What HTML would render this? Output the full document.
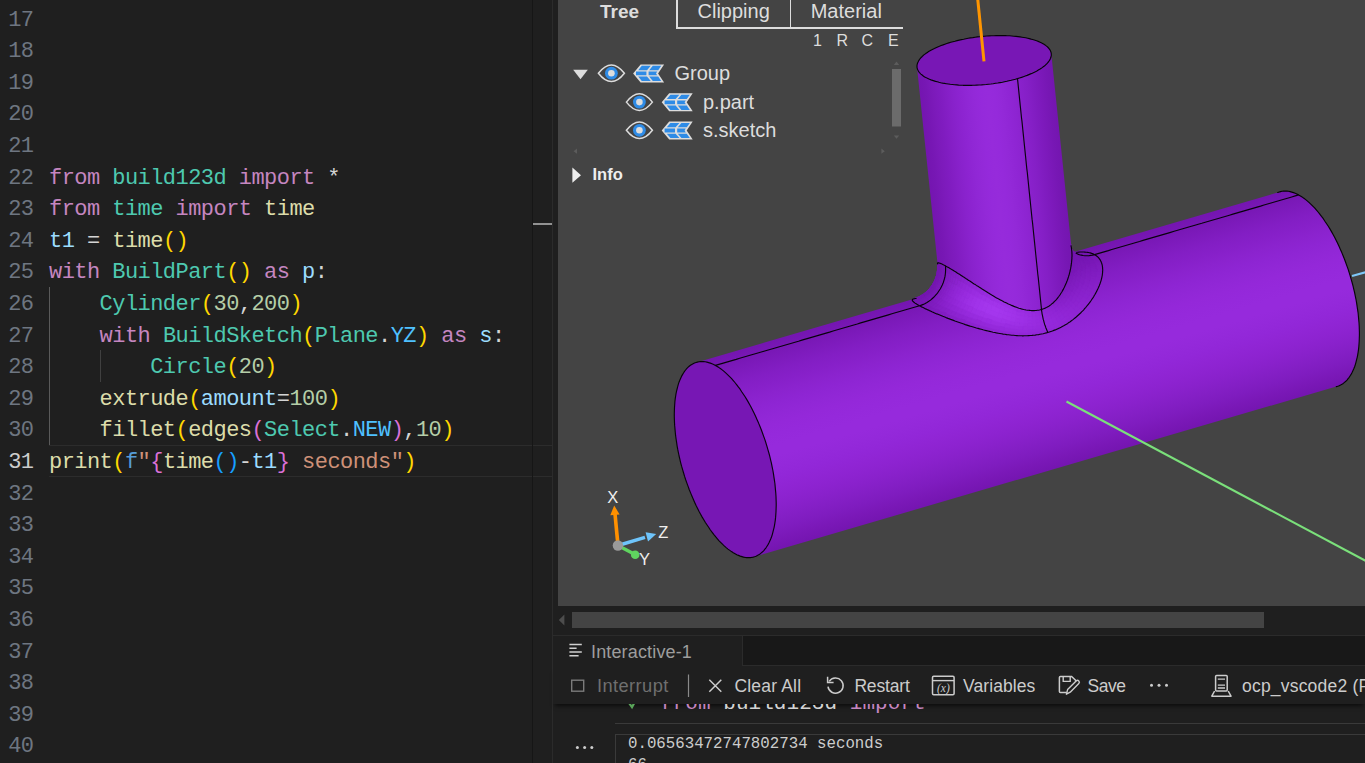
<!DOCTYPE html>
<html lang="en">
<head>
<meta charset="utf-8">
<title>build123d - ocp_vscode</title>
<style>
html,body{margin:0;padding:0;}
body{width:1365px;height:763px;overflow:hidden;background:#1f1f1f;position:relative;font-family:"Liberation Sans",sans-serif;}
.abs{position:absolute;}
#editor{position:absolute;left:0;top:0;width:552px;height:763px;background:#1f1f1f;overflow:hidden;
  font-family:"Liberation Mono",monospace;font-size:22px;letter-spacing:-0.55px;line-height:31.6px;}
.ln{position:absolute;left:0;width:33.5px;margin-top:2px;text-align:right;color:#6e7681;height:31.6px;white-space:pre;}
.ln.cur{color:#cccccc;}
.cl{position:absolute;left:49px;margin-top:2px;height:31.6px;white-space:pre;color:#d4d4d4;}
.guide{position:absolute;width:1px;}
#viewer{position:absolute;left:558px;top:0;width:807px;height:606px;background:#444444;overflow:hidden;}
#viewer svg{position:absolute;left:-558px;top:0;}
.tab{position:absolute;top:0;height:28px;font-size:20px;color:#dddddd;line-height:22px;white-space:pre;}
.tree{position:absolute;font-size:20px;color:#dddddd;white-space:pre;line-height:24px;}
.tb{position:absolute;top:674px;height:24px;line-height:24px;font-size:17.5px;color:#cccccc;white-space:pre;}
</style>
</head>
<body>
<!-- ================= editor ================= -->
<div id="editor">
<div class="abs" style="left:49px;top:445px;width:503px;height:1px;background:#2c2c2c"></div>
<div class="abs" style="left:49px;top:476px;width:503px;height:1px;background:#2c2c2c"></div>
<div class="guide" style="left:49px;top:287px;height:158px;background:#5a5a5a"></div>
<div class="guide" style="left:100px;top:350px;height:32px;background:#404040"></div>
<div class="ln" style="top:2.6px">17</div><div class="ln" style="top:34.2px">18</div><div class="ln" style="top:65.8px">19</div><div class="ln" style="top:97.4px">20</div><div class="ln" style="top:129.0px">21</div><div class="ln" style="top:160.6px">22</div><div class="cl" style="top:160.6px"><span style="color:#c586c0">from</span><span style="color:#d4d4d4"> </span><span style="color:#4ec9b0">build123d</span><span style="color:#d4d4d4"> </span><span style="color:#c586c0">import</span><span style="color:#d4d4d4"> *</span></div><div class="ln" style="top:192.2px">23</div><div class="cl" style="top:192.2px"><span style="color:#c586c0">from</span><span style="color:#d4d4d4"> </span><span style="color:#4ec9b0">time</span><span style="color:#d4d4d4"> </span><span style="color:#c586c0">import</span><span style="color:#d4d4d4"> </span><span style="color:#dcdcaa">time</span></div><div class="ln" style="top:223.8px">24</div><div class="cl" style="top:223.8px"><span style="color:#9cdcfe">t1</span><span style="color:#d4d4d4"> = </span><span style="color:#dcdcaa">time</span><span style="color:#ffd700">()</span></div><div class="ln" style="top:255.4px">25</div><div class="cl" style="top:255.4px"><span style="color:#c586c0">with</span><span style="color:#d4d4d4"> </span><span style="color:#4ec9b0">BuildPart</span><span style="color:#ffd700">()</span><span style="color:#d4d4d4"> </span><span style="color:#c586c0">as</span><span style="color:#d4d4d4"> </span><span style="color:#9cdcfe">p</span><span style="color:#d4d4d4">:</span></div><div class="ln" style="top:287.0px">26</div><div class="cl" style="top:287.0px"><span style="color:#d4d4d4">    </span><span style="color:#4ec9b0">Cylinder</span><span style="color:#ffd700">(</span><span style="color:#b5cea8">30</span><span style="color:#d4d4d4">,</span><span style="color:#b5cea8">200</span><span style="color:#ffd700">)</span></div><div class="ln" style="top:318.6px">27</div><div class="cl" style="top:318.6px"><span style="color:#d4d4d4">    </span><span style="color:#c586c0">with</span><span style="color:#d4d4d4"> </span><span style="color:#4ec9b0">BuildSketch</span><span style="color:#ffd700">(</span><span style="color:#4ec9b0">Plane</span><span style="color:#d4d4d4">.</span><span style="color:#4fc1ff">YZ</span><span style="color:#ffd700">)</span><span style="color:#d4d4d4"> </span><span style="color:#c586c0">as</span><span style="color:#d4d4d4"> </span><span style="color:#9cdcfe">s</span><span style="color:#d4d4d4">:</span></div><div class="ln" style="top:350.2px">28</div><div class="cl" style="top:350.2px"><span style="color:#d4d4d4">        </span><span style="color:#4ec9b0">Circle</span><span style="color:#ffd700">(</span><span style="color:#b5cea8">20</span><span style="color:#ffd700">)</span></div><div class="ln" style="top:381.8px">29</div><div class="cl" style="top:381.8px"><span style="color:#d4d4d4">    </span><span style="color:#dcdcaa">extrude</span><span style="color:#ffd700">(</span><span style="color:#9cdcfe">amount</span><span style="color:#d4d4d4">=</span><span style="color:#b5cea8">100</span><span style="color:#ffd700">)</span></div><div class="ln" style="top:413.4px">30</div><div class="cl" style="top:413.4px"><span style="color:#d4d4d4">    </span><span style="color:#dcdcaa">fillet</span><span style="color:#ffd700">(</span><span style="color:#dcdcaa">edges</span><span style="color:#da70d6">(</span><span style="color:#4ec9b0">Select</span><span style="color:#d4d4d4">.</span><span style="color:#4fc1ff">NEW</span><span style="color:#da70d6">)</span><span style="color:#d4d4d4">,</span><span style="color:#b5cea8">10</span><span style="color:#ffd700">)</span></div><div class="ln cur" style="top:445.0px">31</div><div class="cl" style="top:445.0px"><span style="color:#dcdcaa">print</span><span style="color:#ffd700">(</span><span style="color:#569cd6">f</span><span style="color:#ce9178">&quot;</span><span style="color:#da70d6">{</span><span style="color:#dcdcaa">time</span><span style="color:#179fff">()</span><span style="color:#d4d4d4">-</span><span style="color:#9cdcfe">t1</span><span style="color:#da70d6">}</span><span style="color:#ce9178"> seconds&quot;</span><span style="color:#ffd700">)</span></div><div class="ln" style="top:476.6px">32</div><div class="ln" style="top:508.2px">33</div><div class="ln" style="top:539.8px">34</div><div class="ln" style="top:571.4px">35</div><div class="ln" style="top:603.0px">36</div><div class="ln" style="top:634.6px">37</div><div class="ln" style="top:666.2px">38</div><div class="ln" style="top:697.8px">39</div><div class="ln" style="top:729.4px">40</div>
<div class="abs" style="left:532px;top:0;width:1px;height:763px;background:#161616"></div>
<div class="abs" style="left:533px;top:223px;width:19px;height:2px;background:#929292"></div>
</div>
<div class="abs" style="left:552px;top:0;width:1px;height:763px;background:#2b2b2b"></div>

<!-- ================= viewer ================= -->
<div id="viewer">
<svg width="1365" height="763" viewBox="0 0 1365 763">
<defs><linearGradient id="gm" gradientUnits="userSpaceOnUse" x1="988.4" y1="277" x2="1045.3" y2="471.7"><stop offset="0%" stop-color="#7415b0"/><stop offset="5%" stop-color="#7918b6"/><stop offset="10%" stop-color="#7e1bbd"/><stop offset="15%" stop-color="#831ec4"/><stop offset="20%" stop-color="#8720c9"/><stop offset="25%" stop-color="#8b23ce"/><stop offset="30%" stop-color="#8e25d3"/><stop offset="35%" stop-color="#9127d6"/><stop offset="40%" stop-color="#9428d9"/><stop offset="45%" stop-color="#9529db"/><stop offset="50%" stop-color="#962adc"/><stop offset="55%" stop-color="#962adc"/><stop offset="60%" stop-color="#9429da"/><stop offset="65%" stop-color="#9227d8"/><stop offset="70%" stop-color="#9025d4"/><stop offset="75%" stop-color="#8d23d0"/><stop offset="80%" stop-color="#8921cb"/><stop offset="85%" stop-color="#841fc5"/><stop offset="90%" stop-color="#7f1cbf"/><stop offset="95%" stop-color="#7a18b7"/><stop offset="100%" stop-color="#7415b0"/></linearGradient><linearGradient id="gb" gradientUnits="userSpaceOnUse" x1="933.4" y1="224.4" x2="1067.6" y2="210.4"><stop offset="0%" stop-color="#7415b0"/><stop offset="5%" stop-color="#7717b4"/><stop offset="10%" stop-color="#7c1aba"/><stop offset="15%" stop-color="#801cc0"/><stop offset="20%" stop-color="#851fc6"/><stop offset="25%" stop-color="#8922cc"/><stop offset="30%" stop-color="#8d24d1"/><stop offset="35%" stop-color="#9027d5"/><stop offset="40%" stop-color="#9329d8"/><stop offset="45%" stop-color="#952adb"/><stop offset="50%" stop-color="#962bdb"/><stop offset="55%" stop-color="#952adb"/><stop offset="60%" stop-color="#9329d8"/><stop offset="65%" stop-color="#9026d5"/><stop offset="70%" stop-color="#8d24d1"/><stop offset="75%" stop-color="#8921cb"/><stop offset="80%" stop-color="#851fc6"/><stop offset="85%" stop-color="#801cc0"/><stop offset="90%" stop-color="#7c19ba"/><stop offset="95%" stop-color="#7717b4"/><stop offset="100%" stop-color="#7415b0"/></linearGradient></defs><path d="M754 556.8 L751.8 557.4 L749.4 557.6 L747 557.6 L744.5 557.2 L742 556.7 L739.4 555.8 L736.8 554.6 L734.1 553.2 L731.4 551.6 L728.7 549.6 L726 547.4 L723.3 545 L720.6 542.3 L717.9 539.4 L715.2 536.2 L712.6 532.9 L710 529.3 L707.4 525.5 L704.9 521.6 L702.4 517.5 L700.1 513.2 L697.7 508.7 L695.5 504.1 L693.3 499.4 L691.3 494.6 L689.3 489.7 L687.4 484.7 L685.7 479.6 L684 474.5 L682.5 469.3 L681.1 464.1 L679.8 458.9 L678.6 453.7 L677.6 448.5 L676.7 443.3 L676 438.2 L675.3 433.1 L674.9 428.1 L674.5 423.2 L674.4 418.4 L674.3 413.8 L674.4 409.2 L674.7 404.8 L675.1 400.6 L675.6 396.5 L676.3 392.6 L677.1 388.9 L678 385.4 L679.1 382.1 L680.3 379 L681.7 376.1 L683.1 373.5 L684.7 371.1 L686.4 369 L688.2 367.1 L690.1 365.5 L692.2 364.2 L694.3 363.1 L696.5 362.4 L1279.7 191.9 L1281.9 191.3 L1284.3 191.1 L1286.7 191.1 L1289.2 191.5 L1291.7 192 L1294.3 192.9 L1296.9 194.1 L1299.6 195.5 L1302.3 197.1 L1305 199.1 L1307.7 201.3 L1310.4 203.7 L1313.1 206.4 L1315.8 209.3 L1318.5 212.5 L1321.1 215.8 L1323.7 219.4 L1326.3 223.2 L1328.8 227.1 L1331.3 231.2 L1333.6 235.5 L1336 240 L1338.2 244.6 L1340.4 249.3 L1342.4 254.1 L1344.4 259 L1346.3 264 L1348 269.1 L1349.7 274.2 L1351.2 279.4 L1352.6 284.6 L1353.9 289.8 L1355.1 295 L1356.1 300.2 L1357 305.4 L1357.7 310.5 L1358.4 315.6 L1358.8 320.6 L1359.2 325.5 L1359.3 330.3 L1359.4 334.9 L1359.3 339.5 L1359 343.9 L1358.6 348.1 L1358.1 352.2 L1357.4 356.1 L1356.6 359.8 L1355.7 363.3 L1354.6 366.6 L1353.4 369.7 L1352 372.6 L1350.6 375.2 L1349 377.6 L1347.3 379.7 L1345.5 381.6 L1343.6 383.2 L1341.5 384.5 L1339.4 385.6 L1337.2 386.3Z" fill="url(#gm)"/><path d="M715.4 365.4 L719 367.6 L722.6 370.2 L726.2 373.3 L729.8 376.7 L733.3 380.6 L736.9 384.9 L740.3 389.6 L743.7 394.6 L747 400 L750.2 405.6 L753.3 411.5 L756.2 417.6 L759 424 L761.6 430.5 L764 437.2 L766.3 444 L768.3 450.9 L770.1 457.8 L771.7 464.7 L773 471.6 L774.2 478.4 L775 485.1 L775.7 491.8 L776.1 498.2 L776.2 504.5 L776.1 510.5 L775.7 516.3 L775 521.8 L774.2 527 L773 531.8 L771.7 536.3 L770.1 540.4 L768.3 544.1 L766.2 547.4 L764 550.3 L761.6 552.7 L759 554.6 L756.2 556.1 L753.3 557.1 L750.2 557.6 L747 557.6 L743.7 557.1 L740.3 556.1 L736.8 554.7 L733.3 552.8 L729.7 550.4 L726.1 547.5 L722.5 544.3 L719 540.6 L715.4 536.5 L711.9 532 L708.5 527.1 L705.1 522 L701.9 516.5 L698.7 510.7 L695.7 504.7 L692.9 498.4 L690.2 492 L687.7 485.4 L685.3 478.6 L683.2 471.8 L681.3 464.9 L679.6 458 L678.1 451.1 L676.9 444.2 L675.9 437.4 L675.1 430.7 L674.6 424.2 L674.3 417.8 L674.3 411.7 L674.6 405.8 L675.1 400.1 L675.9 394.8 L676.9 389.8 L678.1 385.1 L679.6 380.8 L681.3 376.9 L683.2 373.4 L685.4 370.3 L687.7 367.7 L690.2 365.5 L692.9 363.8 L695.8 362.6 L698.8 361.8 L701.9 361.6 L705.2 361.8 L708.5 362.5 L711.9 363.7Z" fill="#7717b4"/><g stroke-width=".7" stroke-linejoin="round"><path d="M1060.8 255.8 L1056.8 257.1 L1053.9 257.4 L1057.7 256.2ZM1064.8 254.7 L1060.8 255.8 L1057.7 256.2 L1061.4 255.2ZM1068.6 253.8 L1064.8 254.7 L1061.4 255.2 L1064.9 254.4ZM1072.2 253 L1068.6 253.8 L1064.9 254.4 L1068.3 253.8ZM1075.6 252.5 L1072.2 253 L1068.3 253.8 L1071.5 253.4ZM1078.9 252.1 L1075.6 252.5 L1071.5 253.4 L1074.5 253.1ZM1071.5 253.4 L1068.3 253.8 L1064.2 253.5 L1067.2 253.2ZM1082 252 L1078.9 252.1 L1074.5 253.1 L1077.3 253.1ZM1074.5 253.1 L1071.5 253.4 L1067.2 253.2 L1070 253ZM1077.3 253.1 L1074.5 253.1 L1070 253 L1072.6 253ZM1080 253.2 L1077.3 253.1 L1072.6 253 L1075 253.1ZM1082.5 253.6 L1080 253.2 L1075 253.1 L1077.3 253.5ZM1075 253.1 L1072.6 253 L1067.9 251.7 L1070.2 251.8ZM1084.8 254.1 L1082.5 253.6 L1077.3 253.5 L1079.4 254ZM1077.3 253.5 L1075 253.1 L1070.2 251.8 L1072.3 252.2ZM1079.4 254 L1077.3 253.5 L1072.3 252.2 L1074.3 252.6ZM1081.3 254.6 L1079.4 254 L1074.3 252.6 L1076.1 253.3ZM1083.1 255.5 L1081.3 254.6 L1076.1 253.3 L1077.8 254.1ZM1076.1 253.3 L1074.3 252.6 L1069.6 250.1 L1071.3 250.7ZM1084.7 256.5 L1083.1 255.5 L1077.8 254.1 L1079.3 255ZM1077.8 254.1 L1076.1 253.3 L1071.3 250.7 L1072.9 251.4ZM1079.3 255 L1077.8 254.1 L1072.9 251.4 L1074.4 252.4ZM1080.7 256.1 L1079.3 255 L1074.4 252.4 L1075.8 253.4ZM1074.4 252.4 L1072.9 251.4 L1068.8 247.7 L1070.3 248.7ZM1081.9 257.3 L1080.7 256.1 L1075.8 253.4 L1077 254.7ZM1075.8 253.4 L1074.4 252.4 L1070.3 248.7 L1071.6 249.7ZM1077 254.7 L1075.8 253.4 L1071.6 249.7 L1072.9 251ZM1078.1 256.1 L1077 254.7 L1072.9 251 L1074 252.4ZM1072.9 251 L1071.6 249.7 L1068.4 245.2 L1069.7 246.5ZM1074 252.4 L1072.9 251 L1069.7 246.5 L1070.9 248ZM1075 254 L1074 252.4 L1070.9 248 L1071.9 249.7ZM1075.8 255.8 L1075 254 L1071.9 249.7 L1072.8 251.5ZM1071.9 249.7 L1070.9 248 L1068.8 242.9 L1069.9 244.7ZM1072.8 251.5 L1071.9 249.7 L1069.9 244.7 L1070.8 246.7ZM1073.5 253.6 L1072.8 251.5 L1070.8 246.7 L1071.5 248.9ZM915.2 298.5 L914.1 298.7 L919.4 296.7 L920.3 296.4ZM1074.2 255.8 L1073.5 253.6 L1071.5 248.9 L1072.2 251.3ZM1071.5 248.9 L1070.8 246.7 L1069.9 241.6 L1070.6 244ZM914.1 298.7 L913.3 299 L918.7 296.9 L919.4 296.7ZM919.4 296.7 L918.7 296.9 L923.7 294 L924.2 293.7ZM924.2 293.7 L923.7 294 L928.1 290.2 L928.4 290ZM1072.2 251.3 L1071.5 248.9 L1070.6 244 L1071.2 246.6ZM928.4 290 L928.1 290.2 L931.8 285.7 L932 285.7ZM932 285.7 L931.8 285.7 L934.7 280.7 L934.8 280.7ZM934.8 280.7 L934.7 280.7 L936.6 275.2 L936.8 275.4ZM1072.6 253.9 L1072.2 251.3 L1071.2 246.6 L1071.6 249.3ZM913.3 299 L912.7 299.3 L918.3 297.3 L918.7 296.9ZM918.7 296.9 L918.3 297.3 L923.4 294.3 L923.7 294ZM923.7 294 L923.4 294.3 L928 290.5 L928.1 290.2ZM928.1 290.2 L928 290.5 L931.7 285.9 L931.8 285.7ZM931.8 285.7 L931.7 285.9 L934.7 280.7 L934.7 280.7ZM934.7 280.7 L934.7 280.7 L936.6 275.1 L936.6 275.2ZM936.6 275.2 L936.6 275.1 L937.6 269.2 L937.6 269.5ZM937.6 269.5 L937.6 269.2 L937.5 263.2 L937.6 263.6ZM1072.9 256.6 L1072.6 253.9 L1071.6 249.3 L1071.9 252.3ZM918.3 297.3 L918.1 297.7 L923.4 294.7 L923.4 294.3ZM923.4 294.3 L923.4 294.7 L928 290.8 L928 290.5ZM912.7 299.3 L912.3 299.7 L918.1 297.7 L918.3 297.3ZM928 290.5 L928 290.8 L931.9 286.1 L931.7 285.9ZM1073.1 259.5 L1072.9 256.6 L1071.9 252.3 L1072 255.3ZM931.7 285.9 L931.9 286.1 L934.9 280.8 L934.7 280.7ZM934.7 280.7 L934.9 280.8 L936.8 275.1 L936.6 275.1ZM936.6 275.1 L936.8 275.1 L937.8 269.1 L937.6 269.2ZM937.6 269.2 L937.8 269.1 L937.6 263 L937.5 263.2ZM928 290.8 L928.3 291.2 L932.2 286.4 L931.9 286.1ZM923.4 294.7 L923.5 295.2 L928.3 291.2 L928 290.8ZM931.9 286.1 L932.2 286.4 L935.3 281 L934.9 280.8ZM918.1 297.7 L918.1 298.2 L923.5 295.2 L923.4 294.7ZM934.9 280.8 L935.3 281 L937.2 275.1 L936.8 275.1ZM912.3 299.7 L912.3 300.2 L918.1 298.2 L918.1 297.7ZM936.8 275.1 L937.2 275.1 L938.1 269 L937.8 269.1ZM937.8 269.1 L938.1 269 L937.9 262.8 L937.6 263Z" fill="#7415b0" stroke="#7415b0"/><path d="M1084.9 252.1 L1082 252 L1077.3 253.1 L1080 253.2ZM1086.9 254.8 L1084.8 254.1 L1079.4 254 L1081.3 254.6ZM1079 257.6 L1078.1 256.1 L1074 252.4 L1075 254ZM1076.6 257.7 L1075.8 255.8 L1072.8 251.5 L1073.5 253.6ZM1074.6 258.2 L1074.2 255.8 L1072.2 251.3 L1072.6 253.9ZM912.3 300.2 L912.5 300.8 L918.4 298.8 L918.1 298.2Z" fill="#7415b1" stroke="#7415b1"/><path d="M1087.6 252.4 L1084.9 252.1 L1080 253.2 L1082.5 253.6ZM1086.1 257.6 L1084.7 256.5 L1079.3 255 L1080.7 256.1ZM1083 258.8 L1081.9 257.3 L1077 254.7 L1078.1 256.1ZM1073 262.5 L1073.1 259.5 L1072 255.3 L1071.9 258.5ZM928.3 291.2 L928.7 291.7 L932.8 286.8 L932.2 286.4ZM923.5 295.2 L923.9 295.7 L928.7 291.7 L928.3 291.2ZM935.3 281 L935.8 281.3 L937.8 275.3 L937.2 275.1ZM918.1 298.2 L918.4 298.8 L923.9 295.7 L923.5 295.2ZM937.2 275.1 L937.8 275.3 L938.7 269.1 L938.1 269ZM938.1 269 L938.7 269.1 L938.4 262.8 L937.9 262.8ZM912.5 300.8 L913 301.4 L919 299.4 L918.4 298.8Z" fill="#7515b1" stroke="#7515b1"/><path d="M1090.2 252.9 L1087.6 252.4 L1082.5 253.6 L1084.8 254.1ZM1090.5 256.7 L1088.8 255.7 L1083.1 255.5 L1084.7 256.5ZM1087.4 259 L1086.1 257.6 L1080.7 256.1 L1081.9 257.3ZM1083.9 260.3 L1083 258.8 L1078.1 256.1 L1079 257.6ZM1075.1 263.5 L1074.9 260.8 L1072.9 256.6 L1073.1 259.5ZM1072.8 265.6 L1073 262.5 L1071.9 258.5 L1071.6 261.8ZM923.9 295.7 L924.5 296.3 L929.4 292.2 L928.7 291.7ZM937.8 275.3 L938.5 275.6 L939.4 269.3 L938.7 269.1ZM913 301.4 L913.8 302.1 L919.8 300.1 L919 299.4Z" fill="#7516b2" stroke="#7516b2"/><path d="M1092.4 253.6 L1090.2 252.9 L1084.8 254.1 L1086.9 254.8ZM1080.5 261.2 L1079.8 259.3 L1075.8 255.8 L1076.6 257.7ZM1077.6 262.1 L1077.2 259.8 L1074.2 255.8 L1074.6 258.2ZM932.8 286.8 L933.4 287.2 L936.5 281.6 L935.8 281.3ZM928.7 291.7 L929.4 292.2 L933.4 287.2 L932.8 286.8ZM935.8 281.3 L936.5 281.6 L938.5 275.6 L937.8 275.3ZM919 299.4 L919.8 300.1 L925.3 296.9 L924.5 296.3ZM939.4 269.3 L940.3 269.6 L940 263.2 L939.1 263ZM913.8 302.1 L914.8 302.9 L920.8 300.8 L919.8 300.1Z" fill="#7616b2" stroke="#7616b2"/><path d="M1094.5 254.6 L1092.4 253.6 L1086.9 254.8 L1088.8 255.7ZM1092 258 L1090.5 256.7 L1084.7 256.5 L1086.1 257.6ZM1088.5 260.5 L1087.4 259 L1081.9 257.3 L1083 258.8ZM1084.6 262.1 L1083.9 260.3 L1079 257.6 L1079.8 259.3ZM1081 263.3 L1080.5 261.2 L1076.6 257.7 L1077.2 259.8ZM1077.9 264.6 L1077.6 262.1 L1074.6 258.2 L1074.9 260.8ZM1075.1 266.3 L1075.1 263.5 L1073.1 259.5 L1073 262.5ZM1072.4 268.9 L1072.8 265.6 L1071.6 261.8 L1071.2 265.2ZM924.5 296.3 L925.3 296.9 L930.2 292.8 L929.4 292.2ZM938.5 275.6 L939.4 276 L940.3 269.6 L939.4 269.3Z" fill="#7616b3" stroke="#7616b3"/><path d="M1096.4 255.8 L1094.5 254.6 L1088.8 255.7 L1090.5 256.7ZM1093.3 259.4 L1092 258 L1086.1 257.6 L1087.4 259ZM1089.4 262.1 L1088.5 260.5 L1083 258.8 L1083.9 260.3ZM1085.3 264 L1084.6 262.1 L1079.8 259.3 L1080.5 261.2ZM1081.4 265.5 L1081 263.3 L1077.2 259.8 L1077.6 262.1ZM1078 267.2 L1077.9 264.6 L1074.9 260.8 L1075.1 263.5ZM1074.9 269.3 L1075.1 266.3 L1073 262.5 L1072.8 265.6ZM1071.9 272.2 L1072.4 268.9 L1071.2 265.2 L1070.6 268.7ZM933.4 287.2 L934.3 287.8 L937.4 282.1 L936.5 281.6ZM925.3 296.9 L926.3 297.6 L931.2 293.4 L930.2 292.8ZM919.8 300.1 L920.8 300.8 L926.3 297.6 L925.3 296.9ZM940.3 269.6 L941.3 270 L941 263.7 L940 263.2Z" fill="#7717b4" stroke="#7717b4"/><path d="M1088.8 255.7 L1086.9 254.8 L1081.3 254.6 L1083.1 255.5ZM1079.8 259.3 L1079 257.6 L1075 254 L1075.8 255.8ZM1077.2 259.8 L1076.6 257.7 L1073.5 253.6 L1074.2 255.8ZM1074.9 260.8 L1074.6 258.2 L1072.6 253.9 L1072.9 256.6ZM932.2 286.4 L932.8 286.8 L935.8 281.3 L935.3 281ZM918.4 298.8 L919 299.4 L924.5 296.3 L923.9 295.7ZM938.7 269.1 L939.4 269.3 L939.1 263 L938.4 262.8Z" fill="#7516b1" stroke="#7516b1"/><path d="M1098 257.2 L1096.4 255.8 L1090.5 256.7 L1092 258ZM1094.4 261.1 L1093.3 259.4 L1087.4 259 L1088.5 260.5ZM1071.1 275.5 L1071.9 272.2 L1070.6 268.7 L1069.8 272.2ZM934.3 287.8 L935.3 288.3 L938.4 282.6 L937.4 282.1ZM930.2 292.8 L931.2 293.4 L935.3 288.3 L934.3 287.8ZM937.4 282.1 L938.4 282.6 L940.5 276.4 L939.4 276ZM939.4 276 L940.5 276.4 L941.3 270 L940.3 269.6ZM920.8 300.8 L922 301.7 L927.5 298.4 L926.3 297.6ZM941.3 270 L942.6 270.6 L942.3 264.2 L941 263.7Z" fill="#7817b5" stroke="#7817b5"/><path d="M1099.4 258.8 L1098 257.2 L1092 258 L1093.3 259.4ZM1095.3 262.9 L1094.4 261.1 L1088.5 260.5 L1089.4 262.1ZM1090.6 266 L1090.1 264 L1084.6 262.1 L1085.3 264ZM1073.9 275.6 L1074.5 272.4 L1072.4 268.9 L1071.9 272.2ZM1070.2 278.9 L1071.1 275.5 L1069.8 272.2 L1068.8 275.7ZM931.2 293.4 L932.4 294.1 L936.4 289 L935.3 288.3ZM940.5 276.4 L941.7 277 L942.6 270.6 L941.3 270ZM922 301.7 L923.5 302.5 L928.9 299.2 L927.5 298.4ZM942.6 270.6 L944 271.3 L943.8 265 L942.3 264.2ZM919.6 305.8 L921.6 306.9 L927.1 304.5 L925.2 303.5Z" fill="#7918b7" stroke="#7918b7"/><path d="M1100.5 260.6 L1099.4 258.8 L1093.3 259.4 L1094.4 261.1ZM1096 264.8 L1095.3 262.9 L1089.4 262.1 L1090.1 264ZM927.5 298.4 L928.9 299.2 L933.7 294.9 L932.4 294.1ZM923.5 302.5 L925.2 303.5 L930.5 300.1 L928.9 299.2Z" fill="#7a19b8" stroke="#7a19b8"/><path d="M1101.4 262.5 L1100.5 260.6 L1094.4 261.1 L1095.3 262.9ZM1091 268.1 L1090.6 266 L1085.3 264 L1085.7 266.1ZM1086 270.7 L1086 268.3 L1081.4 265.5 L1081.6 267.9ZM1081.4 273.2 L1081.6 270.5 L1078 267.2 L1077.9 269.9ZM1077.2 275.8 L1077.6 272.8 L1074.9 269.3 L1074.5 272.4ZM1073.1 278.9 L1073.9 275.6 L1071.9 272.2 L1071.1 275.5ZM1069.1 282.3 L1070.2 278.9 L1068.8 275.7 L1067.7 279.2ZM941.7 277 L943 277.7 L944 271.3 L942.6 270.6ZM944 271.3 L945.5 272.1 L945.4 265.8 L943.8 265ZM921.6 306.9 L924 308 L929.2 305.6 L927.1 304.5Z" fill="#7b19b9" stroke="#7b19b9"/><path d="M1102.1 264.7 L1101.4 262.5 L1095.3 262.9 L1096 264.8ZM1091.1 270.4 L1091 268.1 L1085.7 266.1 L1086 268.3ZM1085.9 273.3 L1086 270.7 L1081.6 267.9 L1081.6 270.5ZM1076.5 278.9 L1077.2 275.8 L1074.5 272.4 L1073.9 275.6ZM1072.2 282.1 L1073.1 278.9 L1071.1 275.5 L1070.2 278.9ZM1067.8 285.7 L1069.1 282.3 L1067.7 279.2 L1066.4 282.7ZM928.9 299.2 L930.5 300.1 L935.2 295.7 L933.7 294.9Z" fill="#7c1abb" stroke="#7c1abb"/><path d="M1102.5 267.1 L1102.1 264.7 L1096 264.8 L1096.4 267ZM1091.1 272.9 L1091.1 270.4 L1086 268.3 L1086 270.7ZM1085.6 276 L1085.9 273.3 L1081.6 270.5 L1081.4 273.2ZM1080.5 278.9 L1081.1 276 L1077.6 272.8 L1077.2 275.8ZM1075.7 282.1 L1076.5 278.9 L1073.9 275.6 L1073.1 278.9ZM1071 285.5 L1072.2 282.1 L1070.2 278.9 L1069.1 282.3ZM1066.3 289 L1067.8 285.7 L1066.4 282.7 L1064.9 286.1ZM937.8 289.7 L939.2 290.5 L942.4 284.7 L940.9 283.9ZM940.9 283.9 L942.4 284.7 L944.5 278.5 L943 277.7ZM930.5 300.1 L932.2 301 L936.9 296.6 L935.2 295.7ZM927.1 304.5 L929.2 305.6 L934.2 302 L932.2 301Z" fill="#7e1bbd" stroke="#7e1bbd"/><path d="M1090.1 264 L1089.4 262.1 L1083.9 260.3 L1084.6 262.1ZM1074.5 272.4 L1074.9 269.3 L1072.8 265.6 L1072.4 268.9Z" fill="#7817b6" stroke="#7817b6"/><path d="M1096.4 267 L1096 264.8 L1090.1 264 L1090.6 266ZM939.6 283.2 L940.9 283.9 L943 277.7 L941.7 277Z" fill="#7c19ba" stroke="#7c19ba"/><path d="M1102.7 269.6 L1102.5 267.1 L1096.4 267 L1096.7 269.3ZM944.5 278.5 L946.1 279.4 L947.2 273.1 L945.5 272.1Z" fill="#7f1bbe" stroke="#7f1bbe"/><path d="M1096.7 269.3 L1096.4 267 L1090.6 266 L1091 268.1ZM926.6 309.3 L929.4 310.6 L934.2 307.9 L931.6 306.7Z" fill="#7d1abc" stroke="#7d1abc"/><path d="M1102.6 272.3 L1102.7 269.6 L1096.7 269.3 L1096.7 271.8ZM1096.5 274.4 L1096.7 271.8 L1091.1 270.4 L1091.1 272.9ZM939.2 290.5 L940.8 291.4 L944 285.6 L942.4 284.7ZM942.4 284.7 L944 285.6 L946.1 279.4 L944.5 278.5ZM932.2 301 L934.2 302 L938.7 297.6 L936.9 296.6ZM949.1 274.2 L951.1 275.4 L951.5 269.3 L949.3 268Z" fill="#801cc0" stroke="#801cc0"/><path d="M1096.7 271.8 L1096.7 269.3 L1091 268.1 L1091.1 270.4ZM947.2 273.1 L949.1 274.2 L949.3 268 L947.3 266.9ZM929.4 310.6 L932.4 312 L936.9 309.2 L934.2 307.9Z" fill="#7e1bbe" stroke="#7e1bbe"/><path d="M1085.7 266.1 L1085.3 264 L1080.5 261.2 L1081 263.3ZM1077.9 269.9 L1078 267.2 L1075.1 263.5 L1075.1 266.3ZM917.7 304.7 L919.6 305.8 L925.2 303.5 L923.5 302.5Z" fill="#7818b6" stroke="#7818b6"/><path d="M1102.3 275.1 L1102.6 272.3 L1096.7 271.8 L1096.5 274.4Z" fill="#811dc2" stroke="#811dc2"/><path d="M1086 268.3 L1085.7 266.1 L1081 263.3 L1081.4 265.5ZM1077.6 272.8 L1077.9 269.9 L1075.1 266.3 L1074.9 269.3ZM938.4 282.6 L939.6 283.2 L941.7 277 L940.5 276.4Z" fill="#7a18b7" stroke="#7a18b7"/><path d="M1101.7 278.1 L1102.3 275.1 L1096.5 274.4 L1096.1 277.1ZM1095.5 280 L1096.1 277.1 L1090.8 275.5 L1090.4 278.3ZM1066.4 295.2 L1068.1 292 L1066.3 289 L1064.6 292.3ZM934.2 307.9 L936.9 309.2 L941.3 305.4 L938.7 304.2Z" fill="#831ec3" stroke="#831ec3"/><path d="M1096.1 277.1 L1096.5 274.4 L1091.1 272.9 L1090.8 275.5ZM1084.4 281.7 L1085.1 278.8 L1081.1 276 L1080.5 278.9ZM1078.8 285.1 L1079.8 282 L1076.5 278.9 L1075.7 282.1ZM1073.4 288.5 L1074.7 285.3 L1072.2 282.1 L1071 285.5ZM1068.1 292 L1069.7 288.7 L1067.8 285.7 L1066.3 289ZM1062.8 295.4 L1064.6 292.3 L1063.3 289.4 L1061.5 292.5ZM946.1 279.4 L947.9 280.4 L949.1 274.2 L947.2 273.1ZM931.6 306.7 L934.2 307.9 L938.7 304.2 L936.4 303.1ZM935.7 313.4 L939.2 314.8 L943.1 311.8 L939.9 310.5Z" fill="#811dc1" stroke="#811dc1"/><path d="M1090.8 275.5 L1091.1 272.9 L1086 270.7 L1085.9 273.3Z" fill="#7f1bbf" stroke="#7f1bbf"/><path d="M1100.9 281.1 L1101.7 278.1 L1096.1 277.1 L1095.5 280ZM1094.6 283 L1095.5 280 L1090.4 278.3 L1089.7 281.2ZM1082.4 287.9 L1083.5 284.8 L1079.8 282 L1078.8 285.1ZM1076.2 291.4 L1077.6 288.2 L1074.7 285.3 L1073.4 288.5ZM1070.3 294.9 L1071.9 291.7 L1069.7 288.7 L1068.1 292ZM942.8 316.3 L946.7 317.9 L950.1 314.6 L946.5 313.2Z" fill="#841ec5" stroke="#841ec5"/><path d="M1081.6 267.9 L1081.4 265.5 L1077.6 262.1 L1077.9 264.6ZM926.3 297.6 L927.5 298.4 L932.4 294.1 L931.2 293.4Z" fill="#7918b6" stroke="#7918b6"/><path d="M1090.4 278.3 L1090.8 275.5 L1085.9 273.3 L1085.6 276Z" fill="#811cc1" stroke="#811cc1"/><path d="M1099.8 284.3 L1100.9 281.1 L1095.5 280 L1094.6 283ZM1093.5 286.1 L1094.6 283 L1089.7 281.2 L1088.8 284.1ZM1081 291 L1082.4 287.9 L1078.8 285.1 L1077.6 288.2ZM1074.6 294.6 L1076.2 291.4 L1073.4 288.5 L1071.9 291.7ZM945.7 286.6 L947.6 287.6 L949.8 281.5 L947.9 280.4Z" fill="#851fc7" stroke="#851fc7"/><path d="M1081.6 270.5 L1081.6 267.9 L1077.9 264.6 L1078 267.2ZM935.3 288.3 L936.4 289 L939.6 283.2 L938.4 282.6Z" fill="#7a18b8" stroke="#7a18b8"/><path d="M1089.7 281.2 L1090.4 278.3 L1085.6 276 L1085.1 278.8Z" fill="#821dc2" stroke="#821dc2"/><path d="M1098.5 287.5 L1099.8 284.3 L1094.6 283 L1093.5 286.1ZM955.6 278.1 L958.1 279.7 L959 274 L956.3 272.3Z" fill="#8720c8" stroke="#8720c8"/><path d="M1085.1 278.8 L1085.6 276 L1081.4 273.2 L1081.1 276ZM1079.8 282 L1080.5 278.9 L1077.2 275.8 L1076.5 278.9ZM1074.7 285.3 L1075.7 282.1 L1073.1 278.9 L1072.2 282.1ZM1069.7 288.7 L1071 285.5 L1069.1 282.3 L1067.8 285.7ZM1064.6 292.3 L1066.3 289 L1064.9 286.1 L1063.3 289.4ZM929.2 305.6 L931.6 306.7 L936.4 303.1 L934.2 302Z" fill="#7f1cbf" stroke="#7f1cbf"/><path d="M1088.8 284.1 L1089.7 281.2 L1085.1 278.8 L1084.4 281.7Z" fill="#841ec4" stroke="#841ec4"/><path d="M1081.1 276 L1081.4 273.2 L1077.9 269.9 L1077.6 272.8ZM943 277.7 L944.5 278.5 L945.5 272.1 L944 271.3ZM945.5 272.1 L947.2 273.1 L947.3 266.9 L945.4 265.8Z" fill="#7d1abb" stroke="#7d1abb"/><path d="M1096.9 290.9 L1098.5 287.5 L1093.5 286.1 L1092.2 289.3ZM1090.6 292.5 L1092.2 289.3 L1087.7 287.2 L1086.3 290.3ZM1084.8 293.5 L1086.3 290.3 L1082.4 287.9 L1081 291ZM1077.6 297.4 L1079.4 294.2 L1076.2 291.4 L1074.6 294.6ZM1059.9 303.9 L1062.3 301.2 L1060.8 298.3 L1058.5 301.1ZM947.6 287.6 L949.7 288.8 L951.9 282.8 L949.8 281.5ZM943.1 311.8 L946.5 313.2 L950.1 309.3 L947 307.9ZM954.9 321 L959.3 322.5 L961.9 319.1 L957.8 317.6Z" fill="#8821ca" stroke="#8821ca"/><path d="M1092.2 289.3 L1093.5 286.1 L1088.8 284.1 L1087.7 287.2ZM1079.4 294.2 L1081 291 L1077.6 288.2 L1076.2 291.4ZM1072.8 297.8 L1074.6 294.6 L1071.9 291.7 L1070.3 294.9ZM1066.3 301.1 L1068.4 298.1 L1066.4 295.2 L1064.4 298.2ZM1056.2 303.7 L1058.5 301.1 L1057.4 298.3 L1055.1 300.9ZM940.7 298.6 L942.9 299.7 L946.6 294.5 L944.5 293.4ZM938.7 304.2 L941.3 305.4 L945.3 300.9 L942.9 299.7Z" fill="#8720c9" stroke="#8720c9"/><path d="M1087.7 287.2 L1088.8 284.1 L1084.4 281.7 L1083.5 284.8ZM1058.5 301.1 L1060.8 298.3 L1059.5 295.5 L1057.4 298.3ZM938.7 297.6 L940.7 298.6 L944.5 293.4 L942.6 292.4ZM936.4 303.1 L938.7 304.2 L942.9 299.7 L940.7 298.6ZM936.9 309.2 L939.9 310.5 L944 306.6 L941.3 305.4ZM946.7 317.9 L950.7 319.4 L953.9 316.1 L950.1 314.6Z" fill="#851fc6" stroke="#851fc6"/><path d="M1095.1 294.2 L1096.9 290.9 L1092.2 289.3 L1090.6 292.5ZM1083 296.7 L1084.8 293.5 L1081 291 L1079.4 294.2ZM941.3 305.4 L944 306.6 L947.9 302.1 L945.3 300.9Z" fill="#8921cc" stroke="#8921cc"/><path d="M1083.5 284.8 L1084.4 281.7 L1080.5 278.9 L1079.8 282ZM1077.6 288.2 L1078.8 285.1 L1075.7 282.1 L1074.7 285.3ZM1071.9 291.7 L1073.4 288.5 L1071 285.5 L1069.7 288.7ZM936.9 296.6 L938.7 297.6 L942.6 292.4 L940.8 291.4ZM934.2 302 L936.4 303.1 L940.7 298.6 L938.7 297.6ZM951.1 275.4 L953.3 276.7 L953.8 270.8 L951.5 269.3ZM939.2 314.8 L942.8 316.3 L946.5 313.2 L943.1 311.8Z" fill="#821dc3" stroke="#821dc3"/><path d="M1086.3 290.3 L1087.7 287.2 L1083.5 284.8 L1082.4 287.9ZM1062.3 301.2 L1064.4 298.2 L1062.8 295.4 L1060.8 298.3ZM939.9 310.5 L943.1 311.8 L947 307.9 L944 306.6ZM950.7 319.4 L954.9 321 L957.8 317.6 L953.9 316.1Z" fill="#8620c8" stroke="#8620c8"/><path d="M1093.1 297.6 L1095.1 294.2 L1090.6 292.5 L1088.8 295.7ZM1081 299.9 L1083 296.7 L1079.4 294.2 L1077.6 297.4ZM1068.5 303.9 L1070.8 300.9 L1068.4 298.1 L1066.3 301.1ZM1061.6 306.7 L1064.1 304 L1062.3 301.2 L1059.9 303.9ZM942.9 299.7 L945.3 300.9 L948.9 295.7 L946.6 294.5ZM946.5 313.2 L950.1 314.6 L953.5 310.7 L950.1 309.3ZM963.8 324 L968.4 325.6 L970.5 322 L966.1 320.6Z" fill="#8a22cd" stroke="#8a22cd"/><path d="M1088.8 295.7 L1090.6 292.5 L1086.3 290.3 L1084.8 293.5ZM1075.6 300.5 L1077.6 297.4 L1074.6 294.6 L1072.8 297.8ZM1057.4 306.5 L1059.9 303.9 L1058.5 301.1 L1056.2 303.7Z" fill="#8922cc" stroke="#8922cc"/><path d="M1090.8 301 L1093.1 297.6 L1088.8 295.7 L1086.8 299ZM946.6 294.5 L948.9 295.7 L951.9 290 L949.7 288.8ZM944 306.6 L947 307.9 L950.6 303.4 L947.9 302.1ZM968.4 325.6 L973.2 327 L975 323.5 L970.5 322Z" fill="#8b23ce" stroke="#8b23ce"/><path d="M1086.8 299 L1088.8 295.7 L1084.8 293.5 L1083 296.7ZM1050.9 308 L1053.6 306 L1052.7 303.2 L1050.1 305.3ZM949.7 288.8 L951.9 290 L954.2 284.1 L951.9 282.8Z" fill="#8a22ce" stroke="#8a22ce"/><path d="M1088.3 304.3 L1090.8 301 L1086.8 299 L1084.5 302.3ZM1071 306.6 L1073.4 303.6 L1070.8 300.9 L1068.5 303.9ZM1048 309.8 L1050.9 308 L1050.1 305.3 L1047.4 307ZM945.3 300.9 L947.9 302.1 L951.3 296.9 L948.9 295.7ZM973.2 327 L978 328.4 L979.6 324.9 L975 323.5Z" fill="#8c23d0" stroke="#8c23d0"/><path d="M1084.5 302.3 L1086.8 299 L1083 296.7 L1081 299.9ZM1058.9 309.3 L1061.6 306.7 L1059.9 303.9 L1057.4 306.5Z" fill="#8c23cf" stroke="#8c23cf"/><path d="M1085.6 307.6 L1088.3 304.3 L1084.5 302.3 L1082.1 305.5ZM1068.3 309.5 L1071 306.6 L1068.5 303.9 L1066.1 306.8ZM1051.9 310.8 L1054.8 308.8 L1053.6 306 L1050.9 308ZM951.9 290 L954.3 291.3 L956.5 285.5 L954.2 284.1ZM956.5 285.5 L959.1 287 L960.8 281.3 L958.1 279.7ZM947 307.9 L950.1 309.3 L953.6 304.7 L950.6 303.4ZM963.5 283.1 L966.5 284.9 L967.7 279.7 L964.7 277.7ZM953.9 316.1 L957.8 317.6 L960.7 313.6 L957 312.1ZM978 328.4 L983 329.8 L984.3 326.3 L979.6 324.9Z" fill="#8d24d1" stroke="#8d24d1"/><path d="M1082.1 305.5 L1084.5 302.3 L1081 299.9 L1078.8 303.1ZM1063.4 309.5 L1066.1 306.8 L1064.1 304 L1061.6 306.7Z" fill="#8d24d0" stroke="#8d24d0"/><path d="M1078.8 303.1 L1081 299.9 L1077.6 297.4 L1075.6 300.5ZM1066.1 306.8 L1068.5 303.9 L1066.3 301.1 L1064.1 304ZM1054.8 308.8 L1057.4 306.5 L1056.2 303.7 L1053.6 306ZM950.1 314.6 L953.9 316.1 L957 312.1 L953.5 310.7Z" fill="#8b23cf" stroke="#8b23cf"/><path d="M929.4 292.2 L930.2 292.8 L934.3 287.8 L933.4 287.2ZM936.5 281.6 L937.4 282.1 L939.4 276 L938.5 275.6ZM914.8 302.9 L916.2 303.8 L922 301.7 L920.8 300.8Z" fill="#7717b3" stroke="#7717b3"/><path d="M1082.7 310.9 L1085.6 307.6 L1082.1 305.5 L1079.4 308.6ZM1079.4 308.6 L1082.1 305.5 L1078.8 303.1 L1076.3 306.2ZM1073.7 309.3 L1076.3 306.2 L1073.4 303.6 L1071 306.6ZM1060.6 312.1 L1063.4 309.5 L1061.6 306.7 L1058.9 309.3ZM948.9 295.7 L951.3 296.9 L954.3 291.3 L951.9 290ZM957.8 317.6 L961.9 319.1 L964.5 315.1 L960.7 313.6ZM983 329.8 L988 331 L989.1 327.6 L984.3 326.3Z" fill="#8e24d2" stroke="#8e24d2"/><path d="M1076.3 306.2 L1078.8 303.1 L1075.6 300.5 L1073.4 303.6Z" fill="#8d23d0" stroke="#8d23d0"/><path d="M1073.4 303.6 L1075.6 300.5 L1072.8 297.8 L1070.8 300.9ZM954.2 284.1 L956.5 285.5 L958.1 279.7 L955.6 278.1ZM960.8 281.3 L963.5 283.1 L964.7 277.7 L961.7 275.8Z" fill="#8b22ce" stroke="#8b22ce"/><path d="M1070.8 300.9 L1072.8 297.8 L1070.3 294.9 L1068.4 298.1ZM944.5 293.4 L946.6 294.5 L949.7 288.8 L947.6 287.6ZM951.9 282.8 L954.2 284.1 L955.6 278.1 L953.3 276.7Z" fill="#8821cb" stroke="#8821cb"/><path d="M1079.5 314 L1082.7 310.9 L1079.4 308.6 L1076.5 311.7ZM1070.8 312.2 L1073.7 309.3 L1071 306.6 L1068.3 309.5ZM1048.9 312.6 L1051.9 310.8 L1050.9 308 L1048 309.8ZM947.9 302.1 L950.6 303.4 L953.9 298.2 L951.3 296.9ZM966.5 284.9 L969.5 286.9 L970.9 281.8 L967.7 279.7ZM988 331 L993 332.2 L994 328.7 L989.1 327.6Z" fill="#8f25d3" stroke="#8f25d3"/><path d="M1076.5 311.7 L1079.4 308.6 L1076.3 306.2 L1073.7 309.3ZM1065.5 312.3 L1068.3 309.5 L1066.1 306.8 L1063.4 309.5ZM1045 311.2 L1048 309.8 L1047.4 307 L1044.5 308.4Z" fill="#8e25d3" stroke="#8e25d3"/><path d="M1068.4 298.1 L1070.3 294.9 L1068.1 292 L1066.4 295.2ZM942.6 292.4 L944.5 293.4 L947.6 287.6 L945.7 286.6ZM949.8 281.5 L951.9 282.8 L953.3 276.7 L951.1 275.4Z" fill="#861fc7" stroke="#861fc7"/><path d="M1076.2 317 L1079.5 314 L1076.5 311.7 L1073.4 314.7ZM1073.4 314.7 L1076.5 311.7 L1073.7 309.3 L1070.8 312.2ZM1057.6 314.4 L1060.6 312.1 L1058.9 309.3 L1056.1 311.6ZM1053.1 313.7 L1056.1 311.6 L1054.8 308.8 L1051.9 310.8ZM959.1 287 L961.8 288.7 L963.5 283.1 L960.8 281.3ZM950.1 309.3 L953.5 310.7 L956.7 306.1 L953.6 304.7ZM961.9 319.1 L966.1 320.6 L968.5 316.6 L964.5 315.1Z" fill="#8f25d4" stroke="#8f25d4"/><path d="M936.4 289 L937.8 289.7 L940.9 283.9 L939.6 283.2ZM925.2 303.5 L927.1 304.5 L932.2 301 L930.5 300.1ZM924 308 L926.6 309.3 L931.6 306.7 L929.2 305.6Z" fill="#7c1aba" stroke="#7c1aba"/><path d="M932.4 294.1 L933.7 294.9 L937.8 289.7 L936.4 289Z" fill="#7b19ba" stroke="#7b19ba"/><path d="M1070.1 317.5 L1073.4 314.7 L1070.8 312.2 L1067.7 314.9ZM1072.7 319.9 L1076.2 317 L1073.4 314.7 L1070.1 317.5ZM1068.9 322.5 L1072.7 319.9 L1070.1 317.5 L1066.7 320.1ZM1045.7 314.1 L1048.9 312.6 L1048 309.8 L1045 311.2ZM1041.9 312.3 L1045 311.2 L1044.5 308.4 L1041.5 309.4ZM951.3 296.9 L953.9 298.2 L956.8 292.7 L954.3 291.3ZM954.3 291.3 L956.8 292.7 L959.1 287 L956.5 285.5ZM998.1 333.2 L1003.2 334.1 L1003.8 330.7 L998.9 329.8Z" fill="#9026d5" stroke="#9026d5"/><path d="M1064.4 298.2 L1066.4 295.2 L1064.6 292.3 L1062.8 295.4Z" fill="#841fc5" stroke="#841fc5"/><path d="M1067.7 314.9 L1070.8 312.2 L1068.3 309.5 L1065.5 312.3ZM1062.5 314.8 L1065.5 312.3 L1063.4 309.5 L1060.6 312.1ZM993 332.2 L998.1 333.2 L998.9 329.8 L994 328.7Z" fill="#9025d4" stroke="#9025d4"/><path d="M1064.1 304 L1066.3 301.1 L1064.4 298.2 L1062.3 301.2ZM1053.6 306 L1056.2 303.7 L1055.1 300.9 L1052.7 303.2ZM958.1 279.7 L960.8 281.3 L961.7 275.8 L959 274ZM959.3 322.5 L963.8 324 L966.1 320.6 L961.9 319.1Z" fill="#8921cb" stroke="#8921cb"/><path d="M933.7 294.9 L935.2 295.7 L939.2 290.5 L937.8 289.7Z" fill="#7d1bbc" stroke="#7d1bbc"/><path d="M1066.7 320.1 L1070.1 317.5 L1067.7 314.9 L1064.5 317.5ZM1065 325 L1068.9 322.5 L1066.7 320.1 L1063 322.5ZM1059.2 317.2 L1062.5 314.8 L1060.6 312.1 L1057.6 314.4ZM1054.4 316.5 L1057.6 314.4 L1056.1 311.6 L1053.1 313.7ZM1049.9 315.5 L1053.1 313.7 L1051.9 310.8 L1048.9 312.6ZM950.6 303.4 L953.6 304.7 L956.7 299.6 L953.9 298.2ZM953.5 310.7 L957 312.1 L960 307.6 L956.7 306.1ZM969.5 286.9 L972.7 288.8 L974.1 283.9 L970.9 281.8ZM1008.4 334.8 L1013.5 335.3 L1013.7 332.1 L1008.8 331.5ZM1003.2 334.1 L1008.4 334.8 L1008.8 331.5 L1003.8 330.7Z" fill="#9126d6" stroke="#9126d6"/><path d="M1064.5 317.5 L1067.7 314.9 L1065.5 312.3 L1062.5 314.8ZM966.1 320.6 L970.5 322 L972.7 318.1 L968.5 316.6Z" fill="#9126d5" stroke="#9126d5"/><path d="M916.2 303.8 L917.7 304.7 L923.5 302.5 L922 301.7Z" fill="#7717b5" stroke="#7717b5"/><path d="M1060.8 298.3 L1062.8 295.4 L1061.5 292.5 L1059.5 295.5ZM940.8 291.4 L942.6 292.4 L945.7 286.6 L944 285.6ZM947.9 280.4 L949.8 281.5 L951.1 275.4 L949.1 274.2Z" fill="#831ec4" stroke="#831ec4"/><path d="M935.2 295.7 L936.9 296.6 L940.8 291.4 L939.2 290.5ZM932.4 312 L935.7 313.4 L939.9 310.5 L936.9 309.2Z" fill="#801cbf" stroke="#801cbf"/><path d="M1063 322.5 L1066.7 320.1 L1064.5 317.5 L1061 319.9ZM1055.8 319.3 L1059.2 317.2 L1057.6 314.4 L1054.4 316.5ZM1056.7 329.2 L1061 327.2 L1059.1 324.7 L1055.1 326.6ZM1051 318.3 L1054.4 316.5 L1053.1 313.7 L1049.9 315.5ZM1052.4 331 L1056.7 329.2 L1055.1 326.6 L1051 328.3ZM1047.8 332.5 L1052.4 331 L1051 328.3 L1046.7 329.7ZM1038.6 313.1 L1041.9 312.3 L1041.5 309.4 L1038.4 310.2ZM961.8 288.7 L964.7 290.4 L966.5 284.9 L963.5 283.1ZM1023.7 335.8 L1028.7 335.6 L1028.3 332.6 L1023.5 332.7ZM1018.6 335.7 L1023.7 335.8 L1023.5 332.7 L1018.6 332.5ZM1013.5 335.3 L1018.6 335.7 L1018.6 332.5 L1013.7 332.1ZM970.5 322 L975 323.5 L976.9 319.6 L972.7 318.1Z" fill="#9227d7" stroke="#9227d7"/><path d="M1061 319.9 L1064.5 317.5 L1062.5 314.8 L1059.2 317.2Z" fill="#9127d7" stroke="#9127d7"/><path d="M1056.1 311.6 L1058.9 309.3 L1057.4 306.5 L1054.8 308.8Z" fill="#8d24d2" stroke="#8d24d2"/><path d="M944 285.6 L945.7 286.6 L947.9 280.4 L946.1 279.4Z" fill="#831dc3" stroke="#831dc3"/><path d="M1057.4 322 L1061 319.9 L1059.2 317.2 L1055.8 319.3ZM1059.1 324.7 L1063 322.5 L1061 319.9 L1057.4 322ZM1046.5 317 L1049.9 315.5 L1048.9 312.6 L1045.7 314.1ZM1042.4 315.2 L1045.7 314.1 L1045 311.2 L1041.9 312.3ZM1043.2 333.7 L1047.8 332.5 L1046.7 329.7 L1042.2 330.9ZM956.8 292.7 L959.5 294.2 L961.8 288.7 L959.1 287ZM1038.5 334.6 L1043.2 333.7 L1042.2 330.9 L1037.7 331.7ZM1033.6 335.2 L1038.5 334.6 L1037.7 331.7 L1033 332.3ZM1028.7 335.6 L1033.6 335.2 L1033 332.3 L1028.3 332.6Z" fill="#9227d8" stroke="#9227d8"/><path d="M1061 327.2 L1065 325 L1063 322.5 L1059.1 324.7Z" fill="#9127d6" stroke="#9127d6"/><path d="M1053.6 323.9 L1057.4 322 L1055.8 319.3 L1052.3 321.2ZM1052.3 321.2 L1055.8 319.3 L1054.4 316.5 L1051 318.3ZM1051 328.3 L1055.1 326.6 L1053.6 323.9 L1049.7 325.6ZM953.9 298.2 L956.7 299.6 L959.5 294.2 L956.8 292.7ZM953.6 304.7 L956.7 306.1 L959.7 301.1 L956.7 299.6ZM972.7 288.8 L976 290.9 L977.5 286.1 L974.1 283.9ZM979.6 324.9 L984.3 326.3 L985.8 322.4 L981.3 321Z" fill="#9328d9" stroke="#9328d9"/><path d="M1055.1 326.6 L1059.1 324.7 L1057.4 322 L1053.6 323.9ZM957 312.1 L960.7 313.6 L963.5 309.1 L960 307.6Z" fill="#9328d8" stroke="#9328d8"/><path d="M1049.7 325.6 L1053.6 323.9 L1052.3 321.2 L1048.5 322.7ZM1046.7 329.7 L1051 328.3 L1049.7 325.6 L1045.6 326.9ZM1043 318.2 L1046.5 317 L1045.7 314.1 L1042.4 315.2ZM1038.9 316.1 L1042.4 315.2 L1041.9 312.3 L1038.6 313.1ZM1035.2 313.5 L1038.6 313.1 L1038.4 310.2 L1035.2 310.5ZM984.3 326.3 L989.1 327.6 L990.4 323.8 L985.8 322.4Z" fill="#9428da" stroke="#9428da"/><path d="M1048.5 322.7 L1052.3 321.2 L1051 318.3 L1047.4 319.9ZM1042.2 330.9 L1046.7 329.7 L1045.6 326.9 L1041.4 328ZM964.7 290.4 L967.7 292.1 L969.5 286.9 L966.5 284.9ZM960.7 313.6 L964.5 315.1 L967.1 310.6 L963.5 309.1Z" fill="#9429da" stroke="#9429da"/><path d="M1047.4 319.9 L1051 318.3 L1049.9 315.5 L1046.5 317Z" fill="#9428d9" stroke="#9428d9"/><path d="M1044.6 324.1 L1048.5 322.7 L1047.4 319.9 L1043.8 321.1ZM1045.6 326.9 L1049.7 325.6 L1048.5 322.7 L1044.6 324.1ZM1043.8 321.1 L1047.4 319.9 L1046.5 317 L1043 318.2ZM1037.7 331.7 L1042.2 330.9 L1041.4 328 L1037 328.8ZM1033 332.3 L1037.7 331.7 L1037 328.8 L1032.6 329.3ZM959.5 294.2 L962.4 295.8 L964.7 290.4 L961.8 288.7ZM1028.3 332.6 L1033 332.3 L1032.6 329.3 L1028 329.5ZM976 290.9 L979.4 293 L981 288.3 L977.5 286.1ZM994 328.7 L998.9 329.8 L999.8 326.2 L995.1 325.1ZM989.1 327.6 L994 328.7 L995.1 325.1 L990.4 323.8Z" fill="#9529db" stroke="#9529db"/><path d="M1040.6 325.1 L1044.6 324.1 L1043.8 321.1 L1039.9 322.1ZM1039.9 322.1 L1043.8 321.1 L1043 318.2 L1039.4 319.1ZM1037 328.8 L1041.4 328 L1040.6 325.1 L1036.4 325.8ZM967.7 292.1 L970.8 294 L972.7 288.8 L969.5 286.9Z" fill="#962add" stroke="#962add"/><path d="M1041.4 328 L1045.6 326.9 L1044.6 324.1 L1040.6 325.1ZM1039.4 319.1 L1043 318.2 L1042.4 315.2 L1038.9 316.1ZM1035.3 316.6 L1038.9 316.1 L1038.6 313.1 L1035.2 313.5ZM956.7 299.6 L959.7 301.1 L962.4 295.8 L959.5 294.2ZM1031.7 313.6 L1035.2 313.5 L1035.2 310.5 L1031.8 310.6ZM956.7 306.1 L960 307.6 L962.8 302.6 L959.7 301.1ZM1023.5 332.7 L1028.3 332.6 L1028 329.5 L1023.4 329.5ZM1018.6 332.5 L1023.5 332.7 L1023.4 329.5 L1018.7 329.3ZM1013.7 332.1 L1018.6 332.5 L1018.7 329.3 L1014 328.8ZM964.5 315.1 L968.5 316.6 L970.9 312.2 L967.1 310.6ZM1008.8 331.5 L1013.7 332.1 L1014 328.8 L1009.2 328.1ZM1003.8 330.7 L1008.8 331.5 L1009.2 328.1 L1004.5 327.2Z" fill="#962adc" stroke="#962adc"/><path d="M953.3 276.7 L955.6 278.1 L956.3 272.3 L953.8 270.8Z" fill="#841fc6" stroke="#841fc6"/><path d="M1036 322.7 L1039.9 322.1 L1039.4 319.1 L1035.6 319.6ZM1028 329.5 L1032.6 329.3 L1032.2 326.2 L1027.8 326.4ZM960 307.6 L963.5 309.1 L966.2 304.2 L962.8 302.6Z" fill="#982bdf" stroke="#982bdf"/><path d="M1036.4 325.8 L1040.6 325.1 L1039.9 322.1 L1036 322.7ZM1031.7 316.8 L1035.3 316.6 L1035.2 313.5 L1031.7 313.6ZM962.4 295.8 L965.4 297.4 L967.7 292.1 L964.7 290.4Z" fill="#982bde" stroke="#982bde"/><path d="M1035.6 319.6 L1039.4 319.1 L1038.9 316.1 L1035.3 316.6ZM1032.6 329.3 L1037 328.8 L1036.4 325.8 L1032.2 326.2ZM1028.1 313.4 L1031.7 313.6 L1031.8 310.6 L1028.4 310.3ZM968.5 316.6 L972.7 318.1 L974.9 313.8 L970.9 312.2Z" fill="#972bde" stroke="#972bde"/><path d="M1031.9 323.1 L1036 322.7 L1035.6 319.6 L1031.7 319.9ZM1032.2 326.2 L1036.4 325.8 L1036 322.7 L1031.9 323.1ZM1031.7 319.9 L1035.6 319.6 L1035.3 316.6 L1031.7 316.8ZM1024.4 312.9 L1028.1 313.4 L1028.4 310.3 L1024.9 309.7ZM1018.7 329.3 L1023.4 329.5 L1023.4 326.2 L1018.9 325.9ZM970.8 294 L974.1 295.9 L976 290.9 L972.7 288.8ZM976.9 319.6 L981.3 321 L983.1 316.9 L978.9 315.3Z" fill="#992ce0" stroke="#992ce0"/><path d="M1027.7 323.1 L1031.9 323.1 L1031.7 319.9 L1027.8 319.9ZM1027.8 319.9 L1031.7 319.9 L1031.7 316.8 L1027.9 316.6ZM1023.4 326.2 L1027.8 326.4 L1027.7 323.1 L1023.5 322.9ZM1024 316.2 L1027.9 316.6 L1028.1 313.4 L1024.4 312.9ZM962.8 302.6 L966.2 304.2 L968.6 299.1 L965.4 297.4ZM974.1 295.9 L977.5 297.8 L979.4 293 L976 290.9ZM999.8 326.2 L1004.5 327.2 L1005.3 323.5 L1000.8 322.4ZM995.1 325.1 L999.8 326.2 L1000.8 322.4 L996.3 321.2ZM990.4 323.8 L995.1 325.1 L996.3 321.2 L991.8 319.8Z" fill="#9b2ee2" stroke="#9b2ee2"/><path d="M1027.8 326.4 L1032.2 326.2 L1031.9 323.1 L1027.7 323.1ZM965.4 297.4 L968.6 299.1 L970.8 294 L967.7 292.1ZM1020.7 312.2 L1024.4 312.9 L1024.9 309.7 L1021.3 308.9ZM963.5 309.1 L967.1 310.6 L969.6 305.9 L966.2 304.2ZM1014 328.8 L1018.7 329.3 L1018.9 325.9 L1014.4 325.3ZM1009.2 328.1 L1014 328.8 L1014.4 325.3 L1009.8 324.5ZM981.3 321 L985.8 322.4 L987.4 318.4 L983.1 316.9ZM986.5 297.1 L990.2 299.2 L991.7 295 L988.1 292.8Z" fill="#9a2de1" stroke="#9a2de1"/><path d="M1027.9 316.6 L1031.7 316.8 L1031.7 313.6 L1028.1 313.4Z" fill="#992de0" stroke="#992de0"/><path d="M959.7 301.1 L962.8 302.6 L965.4 297.4 L962.4 295.8ZM972.7 318.1 L976.9 319.6 L978.9 315.3 L974.9 313.8ZM982.9 295 L986.5 297.1 L988.1 292.8 L984.5 290.6Z" fill="#982cdf" stroke="#982cdf"/><path d="M1023.5 322.9 L1027.7 323.1 L1027.8 319.9 L1023.7 319.6ZM1023.7 319.6 L1027.8 319.9 L1027.9 316.6 L1024 316.2ZM1018.9 325.9 L1023.4 326.2 L1023.5 322.9 L1019.2 322.5ZM1013.1 309.9 L1016.9 311.2 L1017.7 307.8 L1014 306.4ZM993.9 301.2 L997.7 303.2 L999.1 299.2 L995.4 297.2Z" fill="#9c2fe4" stroke="#9c2fe4"/><path d="M1023.4 329.5 L1028 329.5 L1027.8 326.4 L1023.4 326.2Z" fill="#992cdf" stroke="#992cdf"/><path d="M1019.2 322.5 L1023.5 322.9 L1023.7 319.6 L1019.6 319ZM1019.6 319 L1023.7 319.6 L1024 316.2 L1020.1 315.6ZM1009.8 324.5 L1014.4 325.3 L1014.9 321.8 L1010.5 320.9Z" fill="#9e30e6" stroke="#9e30e6"/><path d="M1020.1 315.6 L1024 316.2 L1024.4 312.9 L1020.7 312.2ZM968.6 299.1 L972 300.9 L974.1 295.9 L970.8 294ZM977.5 297.8 L981.1 299.7 L982.9 295 L979.4 293Z" fill="#9d2fe4" stroke="#9d2fe4"/><path d="M966.2 304.2 L969.6 305.9 L972 300.9 L968.6 299.1ZM1014.4 325.3 L1018.9 325.9 L1019.2 322.5 L1014.9 321.8ZM970.9 312.2 L974.9 313.8 L977 309.2 L973.3 307.5ZM1009.2 308.5 L1013.1 309.9 L1014 306.4 L1010.3 304.8ZM1005.4 306.8 L1009.2 308.5 L1010.3 304.8 L1006.6 303.1ZM1001.5 305.1 L1005.4 306.8 L1006.6 303.1 L1002.9 301.2ZM997.7 303.2 L1001.5 305.1 L1002.9 301.2 L999.1 299.2Z" fill="#9d30e5" stroke="#9d30e5"/><path d="M1015.5 318.2 L1019.6 319 L1020.1 315.6 L1016.1 314.7ZM1012.2 313.5 L1016.1 314.7 L1016.9 311.2 L1013.1 309.9ZM996.3 321.2 L1000.8 322.4 L1001.8 318.5 L997.5 317.2ZM984.7 301.7 L988.5 303.6 L990.2 299.2 L986.5 297.1ZM991.8 319.8 L996.3 321.2 L997.5 317.2 L993.2 315.7ZM983.1 316.9 L987.4 318.4 L989 314.1 L984.9 312.5ZM987.4 318.4 L991.8 319.8 L993.2 315.7 L989 314.1Z" fill="#a032e8" stroke="#a032e8"/><path d="M1014.9 321.8 L1019.2 322.5 L1019.6 319 L1015.5 318.2ZM969.6 305.9 L973.3 307.5 L975.5 302.7 L972 300.9ZM972 300.9 L975.5 302.7 L977.5 297.8 L974.1 295.9ZM1005.3 323.5 L1009.8 324.5 L1010.5 320.9 L1006.2 319.8Z" fill="#9f31e7" stroke="#9f31e7"/><path d="M1016.1 314.7 L1020.1 315.6 L1020.7 312.2 L1016.9 311.2ZM974.9 313.8 L978.9 315.3 L980.9 310.9 L977 309.2ZM981.1 299.7 L984.7 301.7 L986.5 297.1 L982.9 295Z" fill="#9e31e6" stroke="#9e31e6"/><path d="M1011.3 317.2 L1015.5 318.2 L1016.1 314.7 L1012.2 313.5ZM973.3 307.5 L977 309.2 L979.1 304.5 L975.5 302.7ZM975.5 302.7 L979.1 304.5 L981.1 299.7 L977.5 297.8ZM1008.1 312.2 L1012.2 313.5 L1013.1 309.9 L1009.2 308.5ZM988.5 303.6 L992.3 305.5 L993.9 301.2 L990.2 299.2Z" fill="#a133e9" stroke="#a133e9"/><path d="M1010.5 320.9 L1014.9 321.8 L1015.5 318.2 L1011.3 317.2Z" fill="#a033e9" stroke="#a033e9"/><path d="M1016.9 311.2 L1020.7 312.2 L1021.3 308.9 L1017.7 307.8ZM990.2 299.2 L993.9 301.2 L995.4 297.2 L991.7 295Z" fill="#9b2ee3" stroke="#9b2ee3"/><path d="M967.1 310.6 L970.9 312.2 L973.3 307.5 L969.6 305.9Z" fill="#9c2ee3" stroke="#9c2ee3"/><path d="M1007.1 316 L1011.3 317.2 L1012.2 313.5 L1008.1 312.2ZM977 309.2 L980.9 310.9 L982.9 306.3 L979.1 304.5ZM979.1 304.5 L982.9 306.3 L984.7 301.7 L981.1 299.7ZM996.2 307.3 L1000.2 309.1 L1001.5 305.1 L997.7 303.2Z" fill="#a234eb" stroke="#a234eb"/><path d="M1006.2 319.8 L1010.5 320.9 L1011.3 317.2 L1007.1 316ZM1000.2 309.1 L1004.1 310.7 L1005.4 306.8 L1001.5 305.1ZM992.3 305.5 L996.2 307.3 L997.7 303.2 L993.9 301.2Z" fill="#a234ea" stroke="#a234ea"/><path d="M1003 314.6 L1007.1 316 L1008.1 312.2 L1004.1 310.7ZM980.9 310.9 L984.9 312.5 L986.7 308.1 L982.9 306.3Z" fill="#a335ec" stroke="#a335ec"/><path d="M1001.8 318.5 L1006.2 319.8 L1007.1 316 L1003 314.6Z" fill="#a335eb" stroke="#a335eb"/><path d="M1004.1 310.7 L1008.1 312.2 L1009.2 308.5 L1005.4 306.8Z" fill="#a134ea" stroke="#a134ea"/><path d="M998.8 313.1 L1003 314.6 L1004.1 310.7 L1000.2 309.1ZM993.2 315.7 L997.5 317.2 L998.8 313.1 L994.7 311.5ZM984.9 312.5 L989 314.1 L990.7 309.8 L986.7 308.1ZM986.7 308.1 L990.7 309.8 L992.3 305.5 L988.5 303.6ZM989 314.1 L993.2 315.7 L994.7 311.5 L990.7 309.8Z" fill="#a436ed" stroke="#a436ed"/><path d="M997.5 317.2 L1001.8 318.5 L1003 314.6 L998.8 313.1Z" fill="#a336ec" stroke="#a336ec"/><path d="M982.9 306.3 L986.7 308.1 L988.5 303.6 L984.7 301.7Z" fill="#a436ec" stroke="#a436ec"/><path d="M1000.8 322.4 L1005.3 323.5 L1006.2 319.8 L1001.8 318.5Z" fill="#9f32e8" stroke="#9f32e8"/><path d="M994.7 311.5 L998.8 313.1 L1000.2 309.1 L996.2 307.3ZM990.7 309.8 L994.7 311.5 L996.2 307.3 L992.3 305.5Z" fill="#a537ee" stroke="#a537ee"/><path d="M1004.5 327.2 L1009.2 328.1 L1009.8 324.5 L1005.3 323.5ZM985.8 322.4 L990.4 323.8 L991.8 319.8 L987.4 318.4Z" fill="#9a2de2" stroke="#9a2de2"/><path d="M978.9 315.3 L983.1 316.9 L984.9 312.5 L980.9 310.9Z" fill="#9f32e7" stroke="#9f32e7"/><path d="M979.4 293 L982.9 295 L984.5 290.6 L981 288.3Z" fill="#972add" stroke="#972add"/><path d="M998.9 329.8 L1003.8 330.7 L1004.5 327.2 L999.8 326.2Z" fill="#9529dc" stroke="#9529dc"/><path d="M975 323.5 L979.6 324.9 L981.3 321 L976.9 319.6Z" fill="#9327d8" stroke="#9327d8"/></g><path d="M937.5 263.3 L937.5 263.1 L937.6 262.9 L937.9 262.8 L938.3 262.8 L938.8 262.9 L939.4 263 L940.1 263.3 L940.9 263.6 L941.8 264 L942.9 264.5 L944 265.1 L945.3 265.8 L946.7 266.5 L948.1 267.3 L949.7 268.3 L951.4 269.3 L953.1 270.3 L955 271.5 L956.9 272.7 L958.9 274 L961 275.4 L963.2 276.8 L965.5 278.2 L967.8 279.8 L970.2 281.3 L972.6 282.9 L975.2 284.6 L977.7 286.2 L980.3 287.9 L983 289.6 L985.7 291.3 L988.4 293 L991.2 294.7 L994 296.3 L996.8 298 L999.6 299.5 L1002.5 301 L1005.3 302.5 L1008.2 303.9 L1011 305.1 L1013.8 306.3 L1016.6 307.4 L1019.4 308.3 L1022.1 309.1 L1024.8 309.7 L1027.5 310.2 L1030.1 310.5 L1032.7 310.6 L1035.2 310.5 L1037.7 310.3 L1040.1 309.8 L1042.4 309.2 L1044.7 308.3 L1046.8 307.3 L1048.9 306 L1051 304.6 L1052.9 303 L1054.8 301.3 L1056.5 299.4 L1058.2 297.3 L1059.8 295.2 L1061.3 292.9 L1062.7 290.5 L1064 288 L1065.2 285.5 L1066.3 282.9 L1067.3 280.3 L1068.2 277.6 L1069 275 L1069.7 272.3 L1070.4 269.6 L1070.9 267 L1071.3 264.4 L1071.6 261.8 L1071.8 259.3 L1071.9 256.8 L1072 254.5 L1071.9 252.1 L1071.7 249.9 L1051.3 53.7 L1051.3 54.7 L1051.3 55.7 L1051.1 56.6 L1050.8 57.6 L1050.4 58.6 L1050 59.6 L1049.4 60.6 L1048.7 61.6 L1047.9 62.6 L1047 63.6 L1046 64.5 L1044.9 65.5 L1043.7 66.5 L1042.5 67.4 L1041.1 68.4 L1039.6 69.3 L1038.1 70.2 L1036.4 71.1 L1034.7 72 L1032.9 72.9 L1031 73.7 L1029.1 74.6 L1027.1 75.4 L1025 76.1 L1022.8 76.9 L1020.6 77.6 L1018.4 78.3 L1016 79 L1013.7 79.6 L1011.2 80.3 L1008.8 80.8 L1006.3 81.4 L1003.7 81.9 L1001.2 82.4 L998.6 82.9 L995.9 83.3 L993.3 83.6 L990.6 84 L988 84.3 L985.3 84.6 L982.6 84.8 L980 85 L977.3 85.1 L974.7 85.2 L972 85.3 L969.4 85.3 L966.8 85.3 L964.2 85.3 L961.7 85.2 L959.2 85.1 L956.8 84.9 L954.3 84.7 L952 84.5 L949.6 84.2 L947.4 83.9 L945.2 83.5 L943 83.1 L941 82.7 L938.9 82.3 L937 81.8 L935.1 81.2 L933.4 80.7 L931.6 80.1 L930 79.5 L928.5 78.8 L927 78.1 L925.7 77.4 L924.4 76.7 L923.2 75.9 L922.2 75.1 L921.2 74.3 L920.3 73.5 L919.5 72.6 L918.8 71.8 L918.3 70.9 L917.8 70 L917.4 69 L917.2 68.1 L917 67.2Z" fill="url(#gb)"/><path d="M1017.5 78.6 L1021.5 77.4 L1025.3 76 L1028.9 74.6 L1032.3 73.2 L1035.4 71.7 L1038.3 70.1 L1040.9 68.5 L1043.3 66.8 L1045.4 65.1 L1047.2 63.4 L1048.6 61.7 L1049.8 59.9 L1050.6 58.2 L1051.1 56.5 L1051.3 54.8 L1051.2 53.1 L1050.7 51.4 L1049.9 49.8 L1048.8 48.3 L1047.4 46.8 L1045.6 45.4 L1043.6 44 L1041.3 42.8 L1038.7 41.6 L1035.8 40.5 L1032.7 39.5 L1029.3 38.6 L1025.7 37.8 L1022 37.2 L1018 36.6 L1013.9 36.2 L1009.6 35.8 L1005.2 35.6 L1000.7 35.6 L996.1 35.6 L991.5 35.8 L986.8 36 L982.1 36.4 L977.4 36.9 L972.8 37.6 L968.2 38.3 L963.7 39.2 L959.3 40.1 L955 41.2 L950.8 42.3 L946.8 43.5 L943 44.9 L939.4 46.3 L936 47.7 L932.9 49.2 L930 50.8 L927.4 52.4 L925 54.1 L922.9 55.8 L921.1 57.5 L919.7 59.2 L918.5 61 L917.7 62.7 L917.2 64.4 L917 66.1 L917.1 67.8 L917.6 69.5 L918.4 71.1 L919.5 72.6 L920.9 74.1 L922.7 75.5 L924.7 76.9 L927 78.1 L929.6 79.3 L932.5 80.4 L935.6 81.4 L939 82.3 L942.6 83.1 L946.3 83.7 L950.3 84.3 L954.4 84.7 L958.7 85.1 L963.1 85.3 L967.6 85.3 L972.2 85.3 L976.8 85.1 L981.5 84.9 L986.2 84.5 L990.9 84 L995.5 83.3 L1000.1 82.6 L1004.6 81.7 L1009 80.8 L1013.3 79.7Z" fill="#7817b5"/><path d="M715.4 365.4 L717.2 366.4 L719 367.6 L720.7 368.8 L722.5 370.1 L724.3 371.6 L726 373.1 L727.8 374.8 L729.6 376.6 L731.4 378.4 L733.1 380.4 L734.9 382.5 L736.6 384.6 L738.3 386.9 L740.1 389.2 L741.7 391.7 L743.4 394.2 L745.1 396.7 L746.7 399.4 L748.3 402.1 L749.9 405 L751.4 407.8 L752.9 410.8 L754.4 413.8 L755.8 416.8 L757.2 419.9 L758.6 423.1 L759.9 426.3 L761.2 429.5 L762.4 432.8 L763.6 436.1 L764.8 439.4 L765.9 442.8 L766.9 446.2 L767.9 449.6 L768.9 453 L769.8 456.4 L770.6 459.8 L771.4 463.2 L772.1 466.6 L772.8 470 L773.4 473.4 L773.9 476.8 L774.4 480.2 L774.9 483.5 L775.2 486.8 L775.5 490.1 L775.8 493.3 L776 496.5 L776.1 499.7 L776.2 502.7 L776.2 505.8 L776.1 508.8 L776 511.7 L775.8 514.6 L775.6 517.4 L775.3 520.1 L774.9 522.8 L774.5 525.3 L774 527.8 L773.4 530.2 L772.8 532.6 L772.2 534.8 L771.5 537 L770.7 539 L769.8 541 L769 542.8 L768 544.6 L767 546.2 L766 547.8 L764.9 549.2 L763.8 550.6 L762.6 551.8 L761.3 552.9 L760.1 553.9 L758.7 554.8 L757.4 555.5 L756 556.2 L754.5 556.7 L753.1 557.1 L751.6 557.4 L750 557.6 L748.5 557.6 L746.9 557.6 L745.2 557.4 L743.6 557.1 L741.9 556.6 L740.2 556.1 L738.5 555.4 L736.8 554.7 L735.1 553.8 L733.3 552.8 L731.5 551.6 L729.8 550.4 L728 549.1 L726.2 547.6 L724.5 546.1 L722.7 544.4 L720.9 542.6 L719.1 540.8 L717.4 538.8 L715.6 536.7 L713.9 534.6 L712.2 532.3 L710.4 530 L708.8 527.5 L707.1 525 L705.4 522.5 L703.8 519.8 L702.2 517.1 L700.6 514.2 L699.1 511.4 L697.6 508.4 L696.1 505.4 L694.7 502.4 L693.3 499.3 L691.9 496.1 L690.6 492.9 L689.3 489.7 L688.1 486.4 L686.9 483.1 L685.7 479.8 L684.6 476.4 L683.6 473 L682.6 469.6 L681.6 466.2 L680.7 462.8 L679.9 459.4 L679.1 456 L678.4 452.6 L677.7 449.2 L677.1 445.8 L676.6 442.4 L676.1 439 L675.6 435.7 L675.3 432.4 L675 429.1 L674.7 425.9 L674.5 422.7 L674.4 419.5 L674.3 416.5 L674.3 413.4 L674.4 410.4 L674.5 407.5 L674.7 404.6 L674.9 401.8 L675.2 399.1 L675.6 396.4 L676 393.9 L676.5 391.4 L677.1 389 L677.7 386.6 L678.3 384.4 L679 382.2 L679.8 380.2 L680.7 378.2 L681.5 376.4 L682.5 374.6 L683.5 373 L684.5 371.4 L685.6 370 L686.7 368.6 L687.9 367.4 L689.2 366.3 L690.4 365.3 L691.8 364.4 L693.1 363.7 L694.5 363 L696 362.5 L697.4 362.1 L698.9 361.8 L700.5 361.6 L702 361.6 L703.6 361.6 L705.3 361.8 L706.9 362.1 L708.6 362.6 L710.3 363.1 L712 363.8 L713.7 364.5 L715.4 365.4M1298.6 194.9 L1300.4 195.9 L1302.2 197.1 L1303.9 198.3 L1305.7 199.6 L1307.5 201.1 L1309.2 202.6 L1311 204.3 L1312.8 206.1 L1314.6 207.9 L1316.3 209.9 L1318.1 212 L1319.8 214.1 L1321.5 216.4 L1323.3 218.7 L1324.9 221.2 L1326.6 223.7 L1328.3 226.2 L1329.9 228.9 L1331.5 231.6 L1333.1 234.5 L1334.6 237.3 L1336.1 240.3 L1337.6 243.3 L1339 246.3 L1340.4 249.4 L1341.8 252.6 L1343.1 255.8 L1344.4 259 L1345.6 262.3 L1346.8 265.6 L1348 268.9 L1349.1 272.3 L1350.1 275.7 L1351.1 279.1 L1352.1 282.5 L1353 285.9 L1353.8 289.3 L1354.6 292.7 L1355.3 296.1 L1356 299.5 L1356.6 302.9 L1357.1 306.3 L1357.6 309.7 L1358.1 313 L1358.4 316.3 L1358.7 319.6 L1359 322.8 L1359.2 326 L1359.3 329.2 L1359.4 332.2 L1359.4 335.3 L1359.3 338.3 L1359.2 341.2 L1359 344.1 L1358.8 346.9 L1358.5 349.6 L1358.1 352.3 L1357.7 354.8 L1357.2 357.3 L1356.6 359.7 L1356 362.1 L1355.4 364.3 L1354.7 366.5 L1353.9 368.5 L1353 370.5 L1352.2 372.3 L1351.2 374.1 L1350.2 375.7 L1349.2 377.3 L1348.1 378.7 L1347 380.1 L1345.8 381.3 L1344.5 382.4 L1343.3 383.4 L1341.9 384.3 L1340.6 385 L1339.2 385.7 L1337.7 386.2 L1336.3 386.6M1277.7 192.5 L1279.2 192 L1280.6 191.6 L1282.1 191.3 L1283.7 191.1 L1285.2 191.1 L1286.8 191.1 L1288.5 191.3 L1290.1 191.6 L1291.8 192.1 L1293.5 192.6 L1295.2 193.3 L1296.9 194 L1298.6 194.9M1017.5 78.6 L1019.5 78 L1021.5 77.4 L1023.4 76.7 L1025.3 76 L1027.1 75.4 L1028.9 74.6 L1030.6 73.9 L1032.3 73.2 L1033.9 72.4 L1035.4 71.7 L1036.9 70.9 L1038.3 70.1 L1039.7 69.3 L1040.9 68.5 L1042.2 67.6 L1043.3 66.8 L1044.4 66 L1045.4 65.1 L1046.3 64.2 L1047.2 63.4 L1047.9 62.5 L1048.6 61.7 L1049.2 60.8 L1049.8 59.9 L1050.2 59 L1050.6 58.2 L1050.9 57.3 L1051.1 56.5 L1051.3 55.6 L1051.3 54.8 L1051.3 53.9 L1051.2 53.1 L1051 52.3 L1050.7 51.4 L1050.3 50.6 L1049.9 49.8 L1049.4 49.1 L1048.8 48.3 L1048.1 47.5 L1047.4 46.8 L1046.5 46.1 L1045.6 45.4 L1044.7 44.7 L1043.6 44 L1042.5 43.4 L1041.3 42.8 L1040 42.2 L1038.7 41.6 L1037.3 41 L1035.8 40.5 L1034.3 40 L1032.7 39.5 L1031 39.1 L1029.3 38.6 L1027.6 38.2 L1025.7 37.8 L1023.9 37.5 L1022 37.2 L1020 36.9 L1018 36.6 L1016 36.4 L1013.9 36.2 L1011.7 36 L1009.6 35.8 L1007.4 35.7 L1005.2 35.6 L1003 35.6 L1000.7 35.6 L998.4 35.6 L996.1 35.6 L993.8 35.7 L991.5 35.8 L989.1 35.9 L986.8 36 L984.5 36.2 L982.1 36.4 L979.8 36.7 L977.4 36.9 L975.1 37.2 L972.8 37.6 L970.5 37.9 L968.2 38.3 L965.9 38.7 L963.7 39.2 L961.5 39.6 L959.3 40.1 L957.1 40.6 L955 41.2 L952.9 41.7 L950.8 42.3 L948.8 42.9 L946.8 43.5 L944.9 44.2 L943 44.9 L941.2 45.5 L939.4 46.3 L937.7 47 L936 47.7 L934.4 48.5 L932.9 49.2 L931.4 50 L930 50.8 L928.6 51.6 L927.4 52.4 L926.1 53.3 L925 54.1 L923.9 54.9 L922.9 55.8 L922 56.7 L921.1 57.5 L920.4 58.4 L919.7 59.2 L919.1 60.1 L918.5 61 L918.1 61.9 L917.7 62.7 L917.4 63.6 L917.2 64.4 L917 65.3 L917 66.1 L917 67 L917.1 67.8 L917.3 68.6 L917.6 69.5 L918 70.3 L918.4 71.1 L918.9 71.8 L919.5 72.6 L920.2 73.4 L920.9 74.1 L921.8 74.8 L922.7 75.5 L923.6 76.2 L924.7 76.9 L925.8 77.5 L927 78.1 L928.3 78.7 L929.6 79.3 L931 79.9 L932.5 80.4 L934 80.9 L935.6 81.4 L937.3 81.8 L939 82.3 L940.7 82.7 L942.6 83.1 L944.4 83.4 L946.3 83.7 L948.3 84 L950.3 84.3 L952.3 84.5 L954.4 84.7 L956.6 84.9 L958.7 85.1 L960.9 85.2 L963.1 85.3 L965.3 85.3 L967.6 85.3 L969.9 85.3 L972.2 85.3 L974.5 85.2 L976.8 85.1 L979.2 85 L981.5 84.9 L983.8 84.7 L986.2 84.5 L988.5 84.2 L990.9 84 L993.2 83.7 L995.5 83.3 L997.8 83 L1000.1 82.6 L1002.4 82.2 L1004.6 81.7 L1006.8 81.3 L1009 80.8 L1011.2 80.3 L1013.3 79.7 L1015.4 79.2 L1017.5 78.6M715.4 365.4 L718.9 364.4 L722.4 363.4 L725.8 362.4 L729.3 361.4 L732.7 360.4 L736.2 359.4 L739.7 358.3 L743.1 357.3 L746.6 356.3 L750 355.3 L753.5 354.3 L757 353.3 L760.4 352.3 L763.9 351.3 L767.3 350.3 L770.8 349.2 L774.3 348.2 L777.7 347.2 L781.2 346.2 L784.6 345.2 L788.1 344.2 L791.6 343.2 L795 342.2 L798.5 341.2 L801.9 340.1 L805.4 339.1 L808.9 338.1 L812.3 337.1 L815.8 336.1 L819.2 335.1 L822.7 334.1 L826.1 333.1 L829.6 332.1 L833.1 331 L836.5 330 L840 329 L843.4 328 L846.9 327 L850.4 326 L853.8 325 L857.3 324 L860.7 322.9 L864.2 321.9 L867.7 320.9 L871.1 319.9 L874.6 318.9 L878 317.9 L881.5 316.9 L885 315.9 L888.4 314.9 L891.9 313.8 L895.3 312.8 L898.8 311.8 L902.3 310.8 L905.7 309.8 L909.2 308.8 L912.6 307.8 L916.1 306.8 L919.6 305.8M1094.5 254.6 L1098 253.6 L1101.4 252.6 L1104.9 251.6 L1108.4 250.6 L1111.8 249.5 L1115.3 248.5 L1118.7 247.5 L1122.2 246.5 L1125.7 245.5 L1129.1 244.5 L1132.6 243.5 L1136 242.5 L1139.5 241.5 L1143 240.4 L1146.4 239.4 L1149.9 238.4 L1153.3 237.4 L1156.8 236.4 L1160.3 235.4 L1163.7 234.4 L1167.2 233.4 L1170.6 232.4 L1174.1 231.3 L1177.6 230.3 L1181 229.3 L1184.5 228.3 L1187.9 227.3 L1191.4 226.3 L1194.9 225.3 L1198.3 224.3 L1201.8 223.3 L1205.2 222.2 L1208.7 221.2 L1212.1 220.2 L1215.6 219.2 L1219.1 218.2 L1222.5 217.2 L1226 216.2 L1229.4 215.2 L1232.9 214.1 L1236.4 213.1 L1239.8 212.1 L1243.3 211.1 L1246.7 210.1 L1250.2 209.1 L1253.7 208.1 L1257.1 207.1 L1260.6 206.1 L1264 205 L1267.5 204 L1271 203 L1274.4 202 L1277.9 201 L1281.3 200 L1284.8 199 L1288.3 198 L1291.7 197 L1295.2 195.9 L1298.6 194.9M1041.5 309.4 L1041.1 305.5 L1040.7 301.6 L1040.3 297.7 L1039.9 293.8 L1039.5 289.9 L1039.1 286 L1038.7 282.1 L1038.3 278.1 L1037.8 274.2 L1037.4 270.3 L1037 266.4 L1036.6 262.5 L1036.2 258.6 L1035.8 254.7 L1035.4 250.7 L1035 246.8 L1034.6 242.9 L1034.2 239 L1033.8 235.1 L1033.4 231.2 L1033 227.3 L1032.6 223.4 L1032.1 219.4 L1031.7 215.5 L1031.3 211.6 L1030.9 207.7 L1030.5 203.8 L1030.1 199.9 L1029.7 196 L1029.3 192.1 L1028.9 188.1 L1028.5 184.2 L1028.1 180.3 L1027.7 176.4 L1027.3 172.5 L1026.8 168.6 L1026.4 164.7 L1026 160.8 L1025.6 156.8 L1025.2 152.9 L1024.8 149 L1024.4 145.1 L1024 141.2 L1023.6 137.3 L1023.2 133.4 L1022.8 129.5 L1022.4 125.5 L1022 121.6 L1021.5 117.7 L1021.1 113.8 L1020.7 109.9 L1020.3 106 L1019.9 102.1 L1019.5 98.2 L1019.1 94.2 L1018.7 90.3 L1018.3 86.4 L1017.9 82.5 L1017.5 78.6M916.1 298.4 L915.7 298.5 L915.2 298.5 L914.8 298.6 L914.5 298.7 L914.1 298.7 L913.8 298.8 L913.5 298.9 L913.3 299 L913 299.1 L912.8 299.2 L912.7 299.3 L912.5 299.5 L912.4 299.6 L912.3 299.7 L912.3 299.9 L912.3 300 L912.3 300.2 L912.3 300.4 L912.4 300.6 L912.5 300.8 L912.7 301 L912.8 301.2 L913 301.4 L913.3 301.6 L913.5 301.9 L913.8 302.1 L914.1 302.4 L914.5 302.6 L914.8 302.9 L915.2 303.2 L915.7 303.5 L916.2 303.8 L916.6 304.1 L917.2 304.4 L917.7 304.7 L918.3 305.1 L918.9 305.4 L919.6 305.8 L920.2 306.1 L920.9 306.5 L921.6 306.9 L922.4 307.2 L923.2 307.6 L924 308 L924.8 308.4 L925.7 308.9 L926.6 309.3 L927.5 309.7 L928.4 310.1 L929.4 310.6 L930.4 311 L931.4 311.5 L932.4 312 L933.5 312.4 L934.6 312.9 L935.7 313.4 L936.8 313.9 L938 314.3 L939.2 314.8 L940.4 315.3 L941.6 315.8 L942.8 316.3 L944.1 316.8 L945.4 317.3 L946.7 317.9 L948 318.4 L949.4 318.9 L950.7 319.4 L952.1 319.9 L953.5 320.4 L954.9 321 L956.4 321.5 L957.8 322 L959.3 322.5 L960.8 323 L962.3 323.5 L963.8 324 L965.3 324.6 L966.9 325.1 L968.4 325.6 L970 326.1 L971.6 326.5 L973.2 327 L974.8 327.5 L976.4 328 L978 328.4 L979.7 328.9 L981.3 329.3 L983 329.8 L984.6 330.2 L986.3 330.6 L988 331 L989.6 331.4 L991.3 331.8 L993 332.2 L994.7 332.5 L996.4 332.9 L998.1 333.2 L999.8 333.5 L1001.5 333.8 L1003.2 334.1 L1004.9 334.3 L1006.7 334.6 L1008.4 334.8 L1010.1 335 L1011.8 335.2 L1013.5 335.3 L1015.2 335.5 L1016.9 335.6 L1018.6 335.7 L1020.3 335.7 L1022 335.8 L1023.7 335.8 L1025.3 335.7 L1027 335.7 L1028.7 335.6 L1030.3 335.5 L1032 335.4 L1033.6 335.2 L1035.2 335.1 L1036.8 334.8 L1038.5 334.6 L1040 334.3 L1041.6 334 L1043.2 333.7 L1044.8 333.3 L1046.3 332.9 L1047.8 332.5 L1049.4 332 L1050.9 331.5 L1052.4 331 L1053.8 330.4 L1055.3 329.9 L1056.7 329.2 L1058.2 328.6 L1059.6 327.9 L1061 327.2 L1062.3 326.5 L1063.7 325.8 L1065 325 L1066.4 324.2 L1067.7 323.4 L1068.9 322.5 L1070.2 321.7 L1071.4 320.8 L1072.7 319.9 L1073.9 318.9 L1075 318 L1076.2 317 L1077.3 316 L1078.4 315 L1079.5 314 L1080.6 313 L1081.6 311.9 L1082.7 310.9 L1083.7 309.8 L1084.6 308.7 L1085.6 307.6 L1086.5 306.5 L1087.4 305.4 L1088.3 304.3 L1089.2 303.2 L1090 302.1 L1090.8 301 L1091.6 299.8 L1092.3 298.7 L1093.1 297.6 L1093.8 296.5 L1094.4 295.3 L1095.1 294.2 L1095.7 293.1 L1096.3 292 L1096.9 290.9 L1097.4 289.7 L1098 288.6 L1098.5 287.5 L1098.9 286.5 L1099.4 285.4 L1099.8 284.3 L1100.2 283.2 L1100.5 282.2 L1100.9 281.1 L1101.2 280.1 L1101.4 279.1 L1101.7 278.1 L1101.9 277.1 L1102.1 276.1 L1102.3 275.1 L1102.4 274.2 L1102.5 273.2 L1102.6 272.3 L1102.6 271.4 L1102.7 270.5 L1102.7 269.6 L1102.6 268.7 L1102.6 267.9 L1102.5 267.1 L1102.4 266.3 L1102.3 265.5 L1102.1 264.7 L1101.9 264 L1101.7 263.3 L1101.4 262.5 L1101.2 261.9 L1100.9 261.2 L1100.5 260.6 L1100.2 259.9 L1099.8 259.3 L1099.4 258.8 L1098.9 258.2 L1098.5 257.7 L1098 257.2 L1097.5 256.7 L1096.9 256.2 L1096.4 255.8 L1095.8 255.4 L1095.2 255 L1094.5 254.6 L1093.9 254.3 L1093.2 253.9 L1092.4 253.6 L1091.7 253.4 L1090.9 253.1 L1090.2 252.9 L1089.3 252.7 L1088.5 252.5 L1087.6 252.4 L1086.8 252.3 L1085.9 252.2 L1084.9 252.1 L1084 252 L1083 252 L1082 252 L1081 252 L1080 252 L1078.9 252.1 L1077.8 252.2 L1076.8 252.3M937.7 264 L937.6 263.8 L937.6 263.6 L937.5 263.5 L937.5 263.4 L937.5 263.2 L937.5 263.1 L937.5 263.1 L937.6 263 L937.6 262.9 L937.7 262.9 L937.9 262.8 L938 262.8 L938.2 262.8 L938.4 262.8 L938.6 262.8 L938.8 262.9 L939.1 263 L939.3 263 L939.6 263.1 L940 263.2 L940.3 263.4 L940.7 263.5 L941 263.7 L941.5 263.8 L941.9 264 L942.3 264.2 L942.8 264.5 L943.3 264.7 L943.8 265 L944.3 265.2 L944.9 265.5 L945.4 265.8 L946 266.2 L946.7 266.5 L947.3 266.9 L947.9 267.2 L948.6 267.6 L949.3 268 L950 268.4 L950.7 268.9 L951.5 269.3 L952.2 269.8 L953 270.3 L953.8 270.8 L954.6 271.3 L955.5 271.8 L956.3 272.3 L957.2 272.9 L958.1 273.5 L959 274 L959.9 274.6 L960.8 275.2 L961.7 275.8 L962.7 276.5 L963.7 277.1 L964.7 277.7 L965.7 278.4 L966.7 279 L967.7 279.7 L968.8 280.4 L969.8 281.1 L970.9 281.8 L972 282.5 L973 283.2 L974.1 283.9 L975.3 284.6 L976.4 285.4 L977.5 286.1 L978.7 286.8 L979.8 287.6 L981 288.3 L982.1 289.1 L983.3 289.8 L984.5 290.6 L985.7 291.3 L986.9 292 L988.1 292.8 L989.3 293.5 L990.5 294.3 L991.7 295 L993 295.7 L994.2 296.4 L995.4 297.2 L996.6 297.9 L997.9 298.6 L999.1 299.2 L1000.4 299.9 L1001.6 300.6 L1002.9 301.2 L1004.1 301.9 L1005.4 302.5 L1006.6 303.1 L1007.8 303.7 L1009.1 304.3 L1010.3 304.8 L1011.6 305.4 L1012.8 305.9 L1014 306.4 L1015.3 306.9 L1016.5 307.3 L1017.7 307.8 L1018.9 308.2 L1020.1 308.5 L1021.3 308.9 L1022.5 309.2 L1023.7 309.5 L1024.9 309.7 L1026.1 310 L1027.3 310.2 L1028.4 310.3 L1029.6 310.4 L1030.7 310.5 L1031.8 310.6 L1033 310.6 L1034.1 310.6 L1035.2 310.5 L1036.3 310.5 L1037.3 310.3 L1038.4 310.2 L1039.5 310 L1040.5 309.7 L1041.5 309.4 L1042.5 309.1 L1043.5 308.8 L1044.5 308.4 L1045.5 307.9 L1046.4 307.5 L1047.4 307 L1048.3 306.4 L1049.2 305.9 L1050.1 305.3 L1051 304.6 L1051.8 303.9 L1052.7 303.2 L1053.5 302.5 L1054.3 301.7 L1055.1 300.9 L1055.9 300.1 L1056.7 299.2 L1057.4 298.3 L1058.1 297.4 L1058.8 296.5 L1059.5 295.5 L1060.2 294.6 L1060.8 293.5 L1061.5 292.5 L1062.1 291.5 L1062.7 290.4 L1063.3 289.4 L1063.8 288.3 L1064.4 287.2 L1064.9 286.1 L1065.4 284.9 L1065.9 283.8 L1066.4 282.7 L1066.8 281.5 L1067.3 280.4 L1067.7 279.2 L1068.1 278 L1068.5 276.9 L1068.8 275.7 L1069.2 274.5 L1069.5 273.3 L1069.8 272.2 L1070.1 271 L1070.3 269.8 L1070.6 268.7 L1070.8 267.5 L1071 266.4 L1071.2 265.2 L1071.3 264.1 L1071.5 262.9 L1071.6 261.8 L1071.7 260.7 L1071.8 259.6 L1071.9 258.5 L1071.9 257.4 L1072 256.4 L1072 255.3 L1072 254.3 L1071.9 253.3 L1071.9 252.3 L1071.8 251.3 L1071.7 250.3 L1071.6 249.3 L1071.5 248.4 L1071.4 247.5 L1071.2 246.6 L1071 245.7M1047.8 332.5 L1047.4 331.6 L1047.1 330.7 L1046.7 329.7 L1046.3 328.8 L1045.9 327.9 L1045.6 326.9 L1045.3 326 L1044.9 325 L1044.6 324.1 L1044.3 323.1 L1044 322.1 L1043.8 321.1 L1043.5 320.1 L1043.2 319.2 L1043 318.2 L1042.8 317.2 L1042.6 316.2 L1042.4 315.2 L1042.2 314.3 L1042 313.3 L1041.9 312.3 L1041.7 311.3 L1041.6 310.4 L1041.5 309.4M1094.5 254.6 L1092.6 255.1 L1090.7 255.4 L1088.8 255.7 L1086.9 255.7 L1085 255.7 L1083.1 255.5 L1081.3 255.1 L1079.5 254.7 L1077.8 254.1 L1076.1 253.3M919.6 305.8 L921.5 305.1 L923.3 304.4 L925.2 303.5 L927 302.5 L928.8 301.3 L930.5 300.1 L932.1 298.7 L933.7 297.3 L935.2 295.7 L936.6 294.1 L938 292.3 L939.2 290.5 L940.4 288.7 L941.4 286.7 L942.4 284.7 L943.2 282.7 L943.9 280.6 L944.5 278.5 L945 276.4 L945.3 274.3 L945.5 272.1 L945.6 270 L945.6 267.9 L945.4 265.8" fill="none" stroke="#000" stroke-width="1.15" stroke-opacity=".93" stroke-linecap="round" stroke-linejoin="round"/>
<!-- axes -->
<line x1="977.7" y1="-1" x2="984" y2="61.3" stroke="#ff9500" stroke-width="3"/>
<line x1="1066.5" y1="401.5" x2="1366" y2="561" stroke="#7be07b" stroke-width="2.2"/>
<line x1="1352" y1="276" x2="1366" y2="272" stroke="#7ec8f8" stroke-width="2.2"/>
<!-- orientation gizmo -->
<g>
<line x1="618" y1="545.5" x2="635" y2="554.5" stroke="#5fd35f" stroke-width="3.4"/>
<circle cx="635.2" cy="554.7" r="4.3" fill="#5fd35f"/>
<line x1="618" y1="545.5" x2="645" y2="537.3" stroke="#6ec4fb" stroke-width="3.4"/>
<path d="M656.2 533.9 L645.6 532.2 L648 541.6Z" fill="#6ec4fb"/>
<line x1="618" y1="545.5" x2="615" y2="514" stroke="#ff9000" stroke-width="3.6"/>
<path d="M614.2 505.4 L610.3 515.3 L619.6 514.4Z" fill="#ff9000"/>
<circle cx="617.9" cy="545.5" r="5.2" fill="#9a9a9a"/>
<g font-family="Liberation Sans, sans-serif" font-size="16.5" fill="#eeeeee">
<text x="607.3" y="503">X</text><text x="658.3" y="538.3">Z</text><text x="639" y="565">Y</text>
</g>
</g>
</svg>

<!-- tabs -->
<div class="tab" style="left:42px;top:0;font-weight:bold;font-size:19px;line-height:23px">Tree</div>
<div class="abs" style="left:118px;top:0;width:2px;height:29px;background:#dddddd"></div>
<div class="abs" style="left:118px;top:27px;width:227px;height:2px;background:#dddddd"></div>
<div class="abs" style="left:232px;top:0;width:1px;height:28px;background:#dddddd"></div>
<div class="tab" style="left:139.5px">Clipping</div>
<div class="tab" style="left:252.7px">Material</div>
<div class="abs" style="left:255px;top:31px;font-size:16px;color:#dddddd;line-height:20px;white-space:pre;letter-spacing:0"><span class="abs" style="left:0">1</span><span class="abs" style="left:23.5px">R</span><span class="abs" style="left:48.5px">C</span><span class="abs" style="left:75px">E</span></div>

<!-- tree -->
<svg class="abs" style="left:0;top:55px;position:absolute" width="350" height="140" viewBox="558 55 350 140">
<defs>
<g id="eye">
<path d="M-13 0 Q-6.5 -8.3 0 -8.3 Q6.5 -8.3 13 0 Q6.5 8.3 0 8.3 Q-6.5 8.3 -13 0Z" fill="none" stroke="#dddddd" stroke-width="1.5"/>
<circle r="6.4" fill="#2e8be6"/><circle r="3.3" fill="#dddddd"/>
</g>
<g id="mesh">
<path d="M-15.5 0 L-8 -9 L15.5 -9 L9.5 0 L15.5 9 L-8 9Z" fill="#dddddd"/>
<path d="M-6.8 -7.6 L2.2 -7.6 L-1.6 -3.2 L-10.4 -3.2Z M4.2 -7.6 L12.6 -7.6 L9.6 -3.2 L0.6 -3.2Z M-12.6 -1.9 L-2.2 -1.9 L-2.2 1.9 L-12.6 1.9Z M0 -1.9 L8.6 -1.9 L7.4 0 L8.6 1.9 L0 1.9Z M-10.4 3.2 L-1.6 3.2 L2.2 7.6 L-6.8 7.6Z M0.6 3.2 L9.6 3.2 L12.6 7.6 L4.2 7.6Z" fill="#2e8be6"/>
</g>
</defs>
<path d="M573.2 69.8 L587.8 69.8 L580.5 79.2Z" fill="#dddddd"/>
<use href="#eye" x="611.4" y="73.2"/><use href="#mesh" x="648.6" y="73.4"/>
<use href="#eye" x="639.4" y="102.1"/><use href="#mesh" x="677.2" y="102.3"/>
<use href="#eye" x="639.4" y="130.3"/><use href="#mesh" x="677.2" y="130.5"/>
<!-- scrollbars -->
<rect x="892" y="69" width="9" height="57.5" fill="#6b6b6b"/>
<path d="M893.8 65 L899.2 65 L896.5 61.6Z M893.8 135.4 L899.2 135.4 L896.5 138.8Z M577 148.6 L577 153.8 L573.6 151.2Z M881.4 148.6 L881.4 153.8 L884.8 151.2Z" fill="#5c5c5c"/>
<path d="M572.4 167.6 L581 175.2 L572.4 182.8Z" fill="#eeeeee"/>
</svg>
<div class="tree" style="left:116.5px;top:61px">Group</div>
<div class="tree" style="left:145px;top:89.5px">p.part</div>
<div class="tree" style="left:145px;top:118px">s.sketch</div>
<div class="abs" style="left:34.5px;top:164px;font-size:16.5px;font-weight:bold;color:#eeeeee;line-height:20px">Info</div>
</div>

<!-- ================= bottom panel ================= -->
<!-- horizontal scrollbar -->
<div class="abs" style="left:572px;top:612px;width:692px;height:16px;background:#444444"></div>
<svg class="abs" style="left:556px;top:610px" width="12" height="20" viewBox="0 0 12 20"><path d="M8.4 4.6 L8.4 15.4 L2.8 10Z" fill="#4d4d4d"/></svg>
<div class="abs" style="left:553px;top:635px;width:812px;height:1px;background:#2b2b2b"></div>
<!-- tab bar -->
<div class="abs" style="left:742px;top:636px;width:623px;height:30px;background:#181818;border-left:1px solid #2b2b2b;border-bottom:1px solid #2b2b2b;box-sizing:border-box"></div>
<svg class="abs" style="left:566px;top:640px" width="20" height="20" viewBox="0 0 20 20"><path d="M3.4 4.6h12.4M3.4 8.3h7.2M3.4 12h12.4M3.4 15.7h9.2" stroke="#d0d0d0" stroke-width="1.5" fill="none"/></svg>
<div class="abs" id="tabname" style="left:591px;top:640px;letter-spacing:.15px;font-size:18px;line-height:24px;color:#9d9d9d;white-space:pre">Interactive-1</div>
<!-- toolbar -->
<div class="abs" style="left:553px;top:667px;width:812px;height:37px;background:#1f1f1f;box-shadow:0 4px 4px -2px rgba(0,0,0,.6)"></div>
<svg class="abs" style="left:553px;top:667px" width="812" height="37" viewBox="553 667 812 37" fill="none" stroke-linecap="butt">
<rect x="571.7" y="680.2" width="12" height="11" stroke="#7b7b7b" stroke-width="1.4"/>
<line x1="688.5" y1="674.5" x2="688.5" y2="697" stroke="#8a8a8a" stroke-width="1.2"/>
<path d="M709.3 679.8 L721.3 691.8 M721.3 679.8 L709.3 691.8" stroke="#cccccc" stroke-width="1.5"/>
<!-- restart -->
<path d="M829.2 681.4 A7.6 7.6 0 1 1 828 686.6" stroke="#cccccc" stroke-width="1.5"/>
<path d="M827.6 676.8 L827.6 682.6 L833.6 682.6" stroke="#cccccc" stroke-width="1.5"/>
<!-- variables -->
<rect x="932.5" y="676.2" width="21.6" height="18.6" rx="1.2" stroke="#cccccc" stroke-width="1.5"/>
<line x1="932.5" y1="680.6" x2="954" y2="680.6" stroke="#cccccc" stroke-width="1.4"/>
<!-- save as -->
<path d="M1066.6 692.6 L1060.4 692.6 Q1059.4 692.6 1059.4 691.6 L1059.4 677.4 Q1059.4 676.4 1060.4 676.4 L1071.6 676.4 L1075.6 680.2 L1075.6 681.6" stroke="#cccccc" stroke-width="1.5"/>
<path d="M1063.2 676.6 L1063.2 681.4 L1070.2 681.4 L1070.2 676.6" stroke="#cccccc" stroke-width="1.4"/>
<path d="M1066.4 694.2 L1067.6 689.6 L1076.4 680.8 Q1077.6 679.8 1078.8 681 Q1080 682.2 1078.8 683.4 L1070.2 692.2 Z" stroke="#cccccc" stroke-width="1.4" stroke-linejoin="round"/>
<!-- more -->
<circle cx="1151.5" cy="685.3" r="1.5" fill="#cccccc"/><circle cx="1159" cy="685.3" r="1.5" fill="#cccccc"/><circle cx="1166.5" cy="685.3" r="1.5" fill="#cccccc"/>
<!-- kernel -->
<rect x="1215.6" y="675.6" width="11.6" height="15.4" rx="1" stroke="#cccccc" stroke-width="1.5"/>
<path d="M1217.8 679.2h7.2M1217.8 685.2h7.2M1217.8 688h7.2" stroke="#cccccc" stroke-width="1.3"/>
<path d="M1214.6 691 L1211.8 696.2 L1231 696.2 L1228.2 691" stroke="#cccccc" stroke-width="1.5" stroke-linejoin="round"/>
<text x="937" y="692" font-family="Liberation Serif, serif" font-style="italic" font-size="11.5" fill="#cccccc" stroke="none">(x)</text>
</svg>
<div class="tb" id="t1" style="left:597px;color:#6f6f6f;font-size:18.3px;letter-spacing:.4px">Interrupt</div>
<div class="tb" id="t2" style="left:734.5px;letter-spacing:.17px">Clear All</div>
<div class="tb" id="t3" style="left:854.4px;letter-spacing:-.16px">Restart</div>
<div class="tb" id="t4" style="left:963px;letter-spacing:.08px">Variables</div>
<div class="tb" id="t5" style="left:1087.5px;letter-spacing:-.5px">Save</div>
<div class="tb" id="t6" style="left:1242px;letter-spacing:.2px">ocp_vscode2 (Python 3.10)</div>
<!-- cell remnants (under toolbar) -->
<div class="abs" style="left:553px;top:704px;width:812px;height:59px;overflow:hidden">
<div class="abs" style="left:107px;top:-16.5px;font-family:'Liberation Mono',monospace;font-size:21px;line-height:31.6px;white-space:pre;letter-spacing:0.05px"><span style="color:#c586c0">from</span> <span style="color:#d4d4d4">build123d</span> <span style="color:#c586c0">import</span></div>
<svg class="abs" style="left:70px;top:-8px" width="20" height="14" viewBox="0 0 20 14"><path d="M4 4 L9 11.2 L15 0" stroke="#5aa55a" stroke-width="2.2" fill="none"/></svg>
<div class="abs" style="left:62px;top:19px;width:750px;height:1px;background:#3a3a3a"></div>
<div class="abs" style="left:62px;top:30px;width:760px;height:60px;border:1px solid #3a3a3a;box-sizing:border-box"></div>
<div class="abs" id="out" style="left:75px;top:30px;font-family:'Liberation Mono',monospace;font-size:15.75px;line-height:21px;color:#cccccc;white-space:pre">0.06563472747802734 seconds
66</div>
<svg class="abs" style="left:20px;top:38px" width="24" height="10" viewBox="0 0 24 10"><circle cx="4.4" cy="5.4" r="1.5" fill="#cccccc"/><circle cx="11.6" cy="5.4" r="1.5" fill="#cccccc"/><circle cx="18.8" cy="5.4" r="1.5" fill="#cccccc"/></svg>
</div>

</body>
</html>
